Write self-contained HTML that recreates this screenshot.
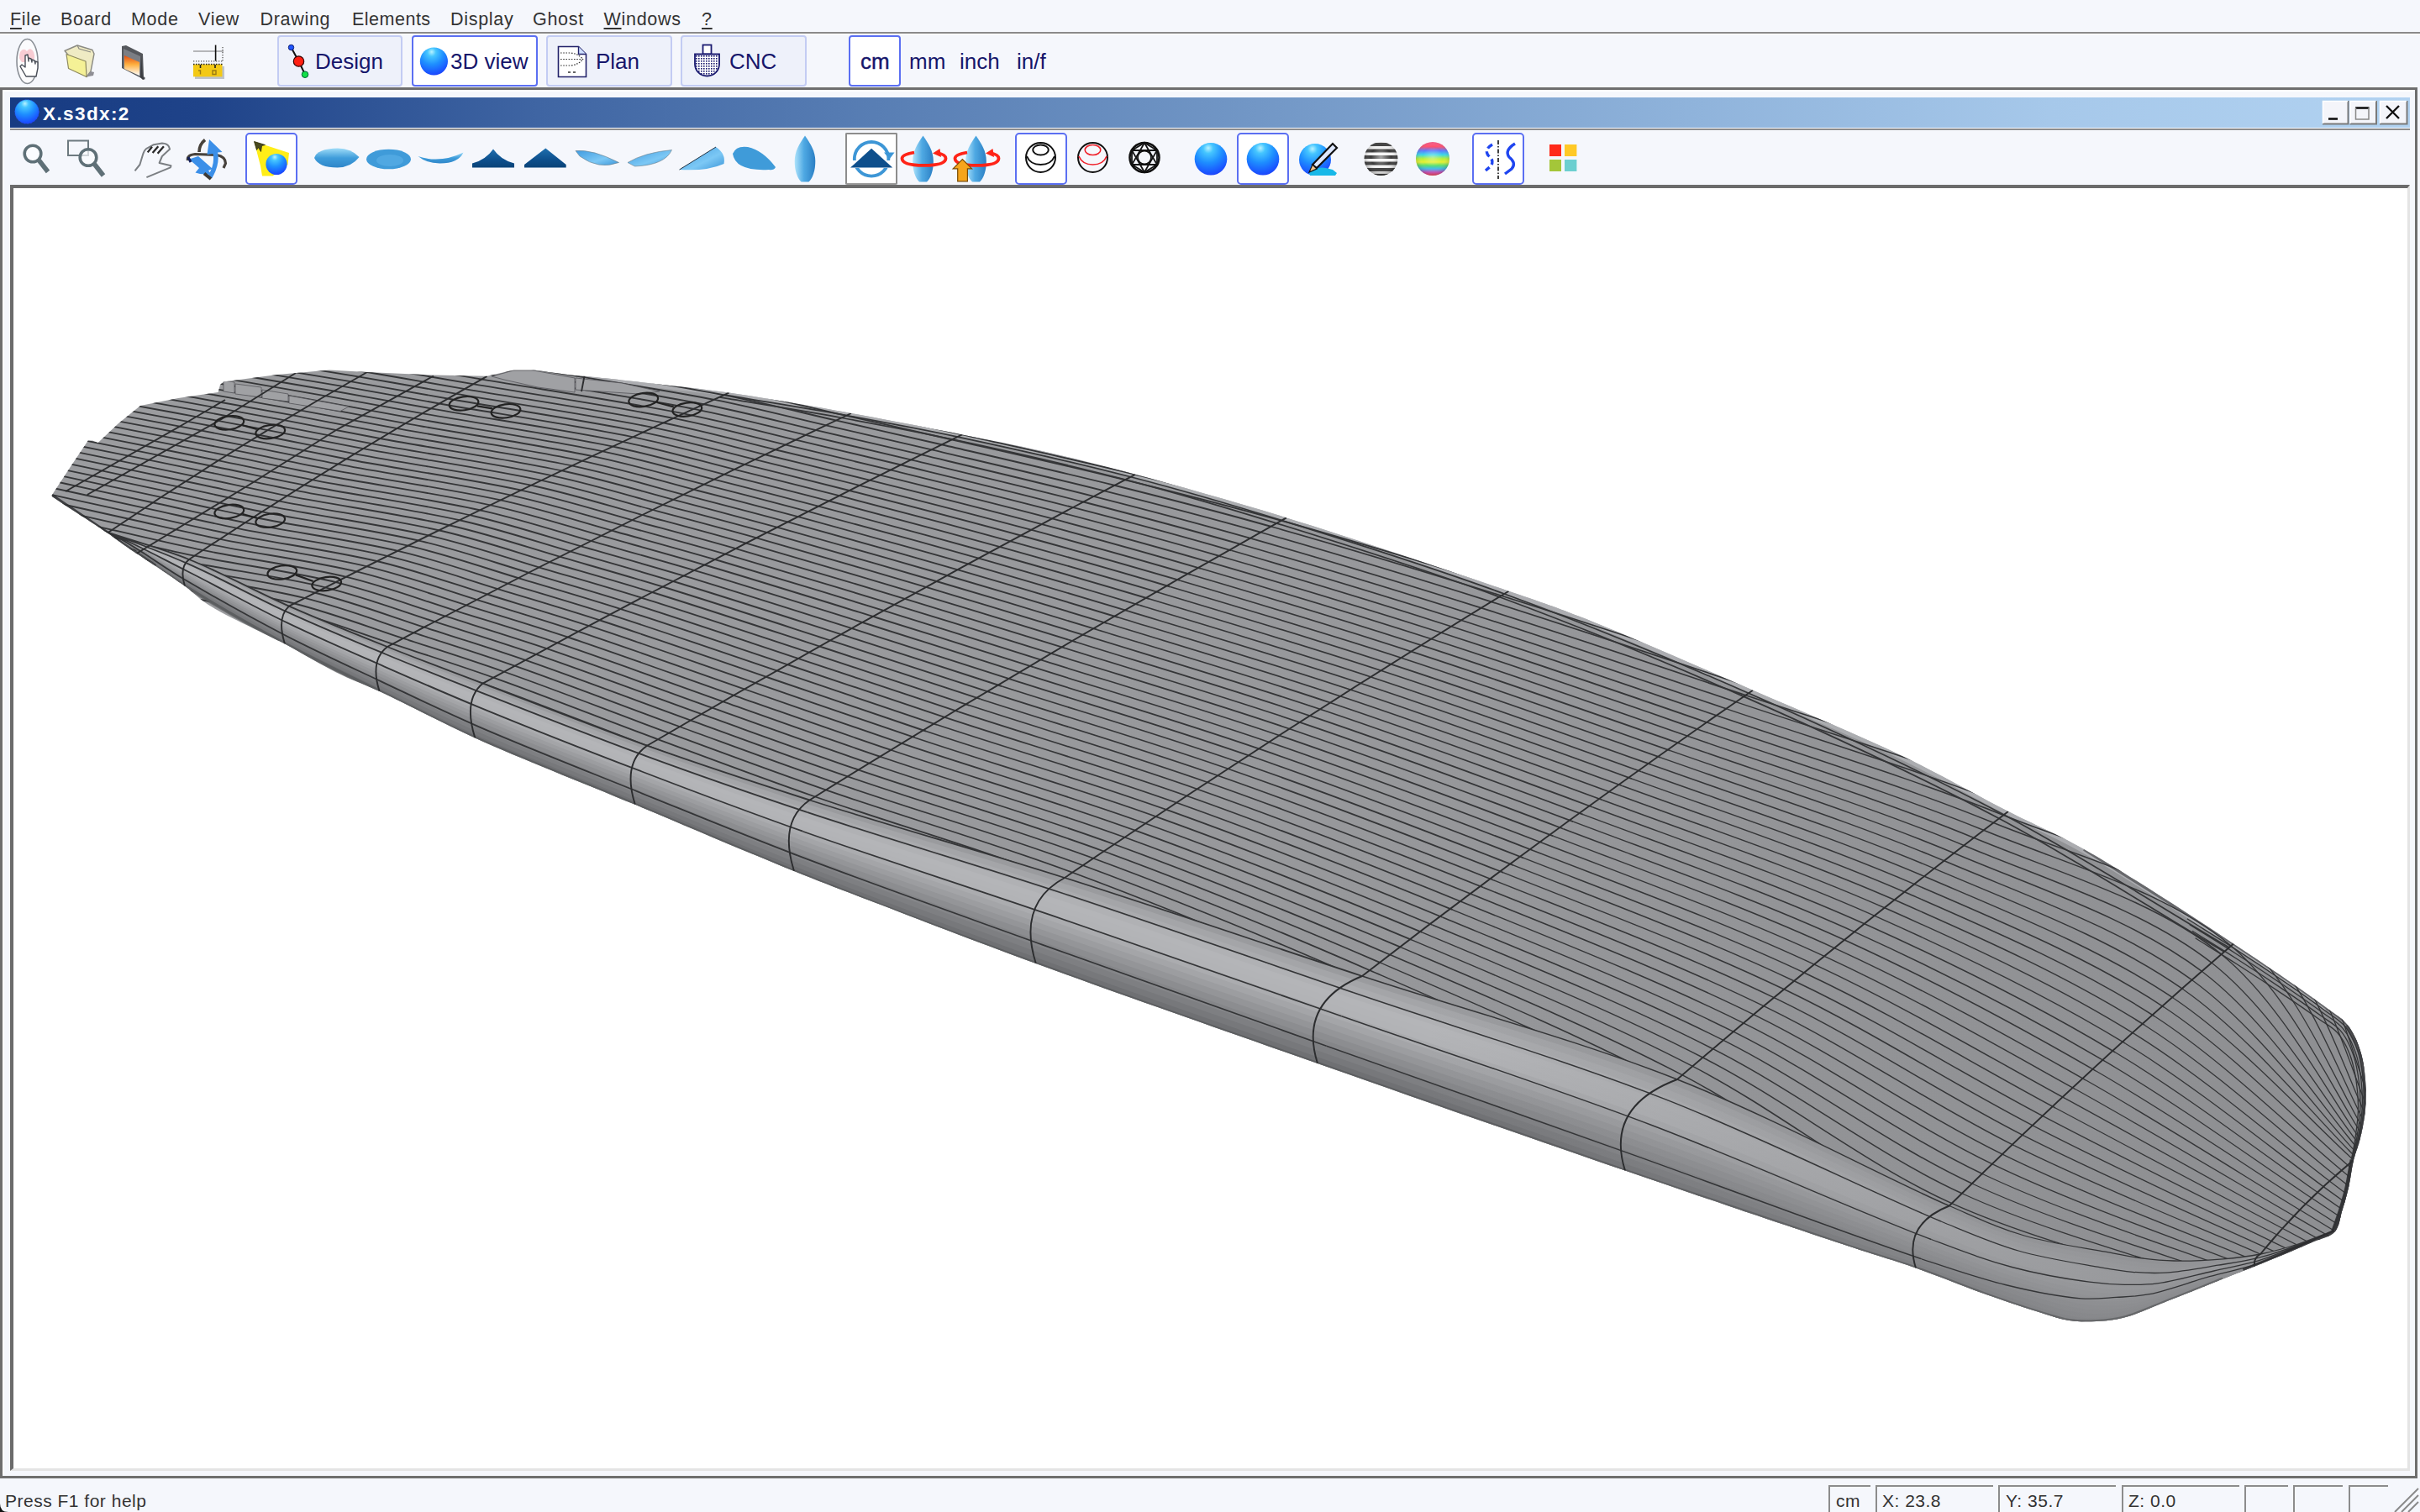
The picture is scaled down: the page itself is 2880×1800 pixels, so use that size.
<!DOCTYPE html>
<html><head><meta charset="utf-8"><title>Shape3d</title>
<style>
html,body{margin:0;padding:0}
body{width:2880px;height:1800px;background:#f5f7fc;position:relative;overflow:hidden;font-family:"Liberation Sans",sans-serif;color:#222}
.abs{position:absolute}
#menubar{left:0;top:0;width:2880px;height:38px;background:#f5f7fc}
#menubar span{position:absolute;top:9.5px;font-size:21.5px;line-height:26px;color:#333;white-space:nowrap;letter-spacing:.7px}
#menubar u{text-decoration:underline;text-underline-offset:3px;text-decoration-thickness:2px}
#msep{left:0;top:38px;width:2880px;height:2px;background:#8a8a8a}
#msep2{left:0;top:40px;width:2880px;height:1px;background:#fff}
.tbtn{position:absolute;top:42px;height:57px;border:2px solid #c3ccf3;border-radius:4px;background:#eef1fa;box-sizing:content-box}
.tbtn.sel{border-color:#5b6ff2;background:#fff}
.tlabel{position:absolute;font-size:26px;line-height:30px;color:#16166b;white-space:nowrap}
.sbtn{position:absolute;top:158px;width:58px;height:58px;border:2px solid #5b6ff2;border-radius:5px;background:#fff}
.sbtn.gray{border-color:#8d8d8d;border-radius:2px;border-bottom-color:#9a9a9a}
#status span{position:absolute;font-size:21px;line-height:26px;color:#333;white-space:nowrap;letter-spacing:.5px;margin-top:1.5px}
.pan{position:absolute;top:1768px;height:32px;border-left:2px solid #8c8c8c;border-top:2px solid #8c8c8c;box-sizing:border-box}
svg{position:absolute;left:0;top:0;overflow:visible}
</style></head>
<body>
<!-- menu bar -->
<div id="menubar" class="abs">
<span style="left:12px"><u>F</u>ile</span>
<span style="left:72px">Board</span>
<span style="left:156px">Mode</span>
<span style="left:236px">View</span>
<span style="left:309.5px">Drawing</span>
<span style="left:419px;letter-spacing:.5px">Elements</span>
<span style="left:536px">Display</span>
<span style="left:634px">Ghost</span>
<span style="left:718.5px"><u>W</u>indows</span>
<span style="left:835px"><u>?</u></span>
</div>
<div id="msep" class="abs"></div><div id="msep2" class="abs"></div>

<!-- main toolbar buttons -->
<div class="tbtn" style="left:330px;width:145px"></div>
<div class="tbtn sel" style="left:490px;width:146px"></div>
<div class="tbtn" style="left:650px;width:146px"></div>
<div class="tbtn" style="left:810px;width:146px"></div>
<div class="tbtn sel" style="left:1010px;width:58px"></div>
<span class="tlabel" style="left:375px;top:58px">Design</span>
<span class="tlabel" style="left:536px;top:58px">3D view</span>
<span class="tlabel" style="left:709px;top:58px">Plan</span>
<span class="tlabel" style="left:868px;top:58px">CNC</span>
<span class="tlabel" style="left:1024px;top:58px;-webkit-text-stroke:.4px #16166b">cm</span>
<span class="tlabel" style="left:1082px;top:58px">mm</span>
<span class="tlabel" style="left:1142px;top:58px">inch</span>
<span class="tlabel" style="left:1210px;top:58px">in/f</span>

<!-- MDI child frame -->
<div class="abs" style="left:0;top:104px;width:2877px;height:1656px;background:#f5f7fc;box-sizing:border-box;border:3px solid #6e6e6e;border-top-width:3px"></div>
<div class="abs" style="left:3px;top:107px;width:2869px;height:1648px;box-sizing:border-box;border-left:2px solid #fff;border-top:2px solid #fff"></div>
<!-- title bar -->
<div class="abs" style="left:12px;top:116px;width:2856px;height:36px;background:linear-gradient(90deg,#173b82 0%,#1f4389 8%,#3f65a3 22%,#587eb4 36%,#7297c6 52%,#8fb3db 70%,#a6c8ea 85%,#b1d2f1 100%)"></div>
<div class="abs" style="left:12px;top:153px;width:2856px;height:2px;background:#8e8e8e"></div>
<span class="abs" style="left:51px;top:124px;font-size:22.5px;line-height:24px;color:#fff;font-weight:bold;letter-spacing:1.4px;white-space:nowrap">X.s3dx:2</span>
<!-- client area -->
<div class="abs" style="left:12px;top:220px;width:2856px;height:1531px;background:#fff;box-sizing:border-box;border-left:4px solid #6b6b6b;border-top:4px solid #6b6b6b;border-right:3px solid #e4e4e4;border-bottom:3px solid #e4e4e4"></div>
<!-- secondary toolbar selected buttons -->
<div class="sbtn" style="left:292px"></div>
<div class="sbtn gray" style="left:1006px"></div>
<div class="sbtn" style="left:1208px"></div>
<div class="sbtn" style="left:1472px"></div>
<div class="sbtn" style="left:1752px"></div>

<!-- status bar -->
<div id="status">
<span style="left:6px;top:1772px">Press F1 for help</span>
<div class="pan" style="left:2176px;width:50px"></div>
<div class="pan" style="left:2232px;width:140px"></div>
<div class="pan" style="left:2378px;width:140px"></div>
<div class="pan" style="left:2525px;width:140px"></div>
<div class="pan" style="left:2671px;width:52px"></div>
<div class="pan" style="left:2729px;width:59px"></div>
<div class="pan" style="left:2795px;width:47px"></div>
<span style="left:2185px;top:1772px">cm</span>
<span style="left:2240px;top:1772px">X: 23.8</span>
<span style="left:2387px;top:1772px">Y: 35.7</span>
<span style="left:2533px;top:1772px">Z: 0.0</span>
</div>
<svg width="2880" height="1800" viewBox="0 0 2880 1800"><defs><clipPath id="bclip"><path d="M61.7 589.5 L83.0 557.0 L104.8 524.5 L110.0 524.5 L116.7 527.0 L141.0 504.0 L167.0 483.0 L212.0 474.0 L259.6 467.0 L262.0 458.0 L266.0 454.4 L330.0 446.0 L392.0 440.6 L437.0 443.0 L516.0 446.5 L579.7 447.8 L596.0 444.0 L611.4 440.6 L635.0 440.6C650.0 442.6 668.9 445.3 680.0 446.5C686.5 447.2 688.3 447.1 695.5 447.8C712.4 449.4 751.6 453.7 780.0 457.0C808.9 460.3 834.7 462.9 867.5 467.6C909.9 473.7 965.7 483.5 1013.0 492.0C1058.1 500.1 1104.6 509.4 1145.0 517.4C1179.3 524.2 1207.2 529.5 1240.0 537.0C1275.6 545.1 1309.7 553.7 1351.0 564.8C1403.9 579.0 1465.5 596.2 1531.0 616.4C1610.9 641.0 1731.9 681.8 1795.5 703.7C1831.6 716.1 1845.9 720.6 1880.0 734.0C1933.9 755.1 2019.9 793.1 2086.0 821.7C2147.5 848.3 2210.0 874.1 2263.8 900.0C2309.9 922.2 2351.4 946.3 2390.0 966.0C2422.4 982.6 2445.5 991.5 2480.0 1011.0C2529.9 1039.2 2605.9 1089.1 2658.0 1123.5C2699.7 1151.0 2745.5 1182.4 2769.0 1200.0C2780.4 1208.5 2787.1 1211.8 2793.7 1220.0C2800.5 1228.4 2805.2 1239.3 2808.7 1250.0C2812.4 1261.1 2814.0 1273.6 2815.0 1285.5C2816.0 1297.2 2816.0 1309.0 2815.0 1320.7C2814.0 1332.5 2811.3 1345.3 2808.7 1356.0C2806.5 1365.1 2803.2 1372.0 2801.0 1381.0C2798.5 1391.1 2797.4 1403.3 2795.0 1413.7C2792.8 1423.3 2790.2 1432.1 2787.4 1441.0C2784.7 1449.7 2784.2 1460.2 2778.6 1466.4C2772.8 1472.8 2762.5 1474.1 2752.7 1478.4C2740.2 1483.9 2725.5 1490.2 2709.7 1496.7C2690.4 1504.7 2666.8 1513.9 2645.3 1522.5C2623.8 1531.1 2601.4 1540.3 2580.8 1548.3C2562.1 1555.6 2542.8 1564.7 2527.0 1568.7C2515.1 1571.7 2505.6 1572.5 2494.9 1573.0C2484.2 1573.5 2473.3 1573.6 2462.6 1572.0C2451.8 1570.4 2442.9 1567.1 2430.4 1563.3C2412.6 1557.9 2388.9 1549.9 2366.0 1541.8C2339.3 1532.4 2308.3 1519.5 2280.0 1509.6C2253.0 1500.1 2234.4 1495.0 2200.0 1483.6C2137.1 1462.8 2029.6 1426.5 1934.0 1393.6C1821.6 1355.0 1687.3 1308.0 1568.0 1266.0C1453.8 1225.8 1329.0 1182.3 1232.8 1147.0C1159.5 1120.1 1093.0 1094.3 1040.0 1074.0C1002.7 1059.7 982.0 1051.9 945.0 1037.0C892.6 1015.8 819.0 984.2 755.8 957.8C692.4 931.3 620.3 903.3 565.3 878.4C522.2 858.9 482.2 837.2 451.6 823.0C431.2 813.5 417.7 809.2 400.0 800.4C380.3 790.7 361.5 778.6 339.0 766.6C311.8 752.1 269.2 733.6 248.0 720.0C235.5 711.9 231.8 706.4 220.0 697.8C201.4 684.1 161.8 658.7 145.8 647.5C138.0 642.0 136.3 640.3 128.6 635.0C113.7 624.7 84.0 605.7 61.7 591.0Z"/></clipPath>
<linearGradient id="deckg" gradientUnits="userSpaceOnUse" x1="200" y1="450" x2="2700" y2="1500"><stop offset="0" stop-color="#9b9c9f"/><stop offset="0.55" stop-color="#97989b"/><stop offset="1" stop-color="#8e8f92"/></linearGradient></defs>
<path d="M61.7 589.5 L83.0 557.0 L104.8 524.5 L110.0 524.5 L116.7 527.0 L141.0 504.0 L167.0 483.0 L212.0 474.0 L259.6 467.0 L262.0 458.0 L266.0 454.4 L330.0 446.0 L392.0 440.6 L437.0 443.0 L516.0 446.5 L579.7 447.8 L596.0 444.0 L611.4 440.6 L635.0 440.6C650.0 442.6 668.9 445.3 680.0 446.5C686.5 447.2 688.3 447.1 695.5 447.8C712.4 449.4 751.6 453.7 780.0 457.0C808.9 460.3 834.7 462.9 867.5 467.6C909.9 473.7 965.7 483.5 1013.0 492.0C1058.1 500.1 1104.6 509.4 1145.0 517.4C1179.3 524.2 1207.2 529.5 1240.0 537.0C1275.6 545.1 1309.7 553.7 1351.0 564.8C1403.9 579.0 1465.5 596.2 1531.0 616.4C1610.9 641.0 1731.9 681.8 1795.5 703.7C1831.6 716.1 1845.9 720.6 1880.0 734.0C1933.9 755.1 2019.9 793.1 2086.0 821.7C2147.5 848.3 2210.0 874.1 2263.8 900.0C2309.9 922.2 2351.4 946.3 2390.0 966.0C2422.4 982.6 2445.5 991.5 2480.0 1011.0C2529.9 1039.2 2605.9 1089.1 2658.0 1123.5C2699.7 1151.0 2745.5 1182.4 2769.0 1200.0C2780.4 1208.5 2787.1 1211.8 2793.7 1220.0C2800.5 1228.4 2805.2 1239.3 2808.7 1250.0C2812.4 1261.1 2814.0 1273.6 2815.0 1285.5C2816.0 1297.2 2816.0 1309.0 2815.0 1320.7C2814.0 1332.5 2811.3 1345.3 2808.7 1356.0C2806.5 1365.1 2803.2 1372.0 2801.0 1381.0C2798.5 1391.1 2797.4 1403.3 2795.0 1413.7C2792.8 1423.3 2790.2 1432.1 2787.4 1441.0C2784.7 1449.7 2784.2 1460.2 2778.6 1466.4C2772.8 1472.8 2762.5 1474.1 2752.7 1478.4C2740.2 1483.9 2725.5 1490.2 2709.7 1496.7C2690.4 1504.7 2666.8 1513.9 2645.3 1522.5C2623.8 1531.1 2601.4 1540.3 2580.8 1548.3C2562.1 1555.6 2542.8 1564.7 2527.0 1568.7C2515.1 1571.7 2505.6 1572.5 2494.9 1573.0C2484.2 1573.5 2473.3 1573.6 2462.6 1572.0C2451.8 1570.4 2442.9 1567.1 2430.4 1563.3C2412.6 1557.9 2388.9 1549.9 2366.0 1541.8C2339.3 1532.4 2308.3 1519.5 2280.0 1509.6C2253.0 1500.1 2234.4 1495.0 2200.0 1483.6C2137.1 1462.8 2029.6 1426.5 1934.0 1393.6C1821.6 1355.0 1687.3 1308.0 1568.0 1266.0C1453.8 1225.8 1329.0 1182.3 1232.8 1147.0C1159.5 1120.1 1093.0 1094.3 1040.0 1074.0C1002.7 1059.7 982.0 1051.9 945.0 1037.0C892.6 1015.8 819.0 984.2 755.8 957.8C692.4 931.3 620.3 903.3 565.3 878.4C522.2 858.9 482.2 837.2 451.6 823.0C431.2 813.5 417.7 809.2 400.0 800.4C380.3 790.7 361.5 778.6 339.0 766.6C311.8 752.1 269.2 733.6 248.0 720.0C235.5 711.9 231.8 706.4 220.0 697.8C201.4 684.1 161.8 658.7 145.8 647.5C138.0 642.0 136.3 640.3 128.6 635.0C113.7 624.7 84.0 605.7 61.7 591.0Z" fill="url(#deckg)"/>
<g clip-path="url(#bclip)">
<path fill="none" stroke="#b2b3b6" stroke-opacity=".8" stroke-width="9" d="M695.5 447.8C723.7 450.9 751.6 453.7 780.0 457.0C808.9 460.3 834.7 462.9 867.5 467.6C909.9 473.7 965.7 483.5 1013.0 492.0C1058.1 500.1 1104.6 509.4 1145.0 517.4C1179.3 524.2 1207.2 529.5 1240.0 537.0C1275.6 545.1 1309.7 553.7 1351.0 564.8C1403.9 579.0 1465.5 596.2 1531.0 616.4C1610.9 641.0 1731.9 681.8 1795.5 703.7C1831.6 716.1 1845.9 720.6 1880.0 734.0C1933.9 755.1 2019.9 793.1 2086.0 821.7C2147.5 848.3 2210.0 874.1 2263.8 900.0C2309.9 922.2 2351.4 946.3 2390.0 966.0C2422.4 982.6 2445.5 991.5 2480.0 1011.0C2529.9 1039.2 2605.9 1089.1 2658.0 1123.5C2699.7 1151.0 2732.0 1174.5 2769.0 1200.0"/>
<path fill="none" stroke="#343537" stroke-width="1.85" d="M255.1 358.0C298.3 364.3 341.8 370.4 384.8 376.8C427.4 383.3 470.2 390.0 511.8 396.7C552.1 403.2 583.7 408.5 630.7 416.4C699.5 427.9 813.6 445.4 884.7 459.3C936.6 469.4 974.8 479.3 1018.8 489.1C1061.5 498.6 1097.8 506.7 1145.0 517.4C1205.3 531.1 1284.2 548.5 1351.0 564.8C1414.7 580.4 1469.2 594.0 1536.9 612.9M246.1 363.7C289.2 370.0 332.6 376.2 375.5 382.7C418.0 389.1 460.8 395.8 502.3 402.5C542.6 409.0 574.2 414.5 621.1 422.3C689.5 433.8 802.5 450.9 873.2 464.8C925.1 475.0 963.2 485.0 1007.2 494.9C1049.9 504.5 1086.2 512.6 1133.3 523.5C1193.6 537.3 1272.4 554.9 1339.1 571.4C1402.8 587.1 1457.3 600.9 1525.1 619.9M237.1 369.4C280.1 375.8 323.4 381.9 366.2 388.4C408.7 394.9 451.4 401.6 492.9 408.4C533.1 414.9 564.7 420.4 611.5 428.2C679.6 439.6 791.5 456.5 861.8 470.4C913.5 480.6 951.7 490.7 995.7 500.7C1038.3 510.4 1074.5 518.6 1121.6 529.5C1181.8 543.5 1260.5 561.4 1327.2 578.0C1390.8 593.9 1445.4 607.9 1513.2 627.0M228.1 375.1C271.1 381.5 314.3 387.7 357.0 394.2C399.4 400.7 442.0 407.5 483.5 414.2C523.6 420.8 555.3 426.2 602.0 434.1C669.6 445.5 780.4 462.1 850.3 475.9C901.9 486.2 940.2 496.5 984.1 506.6C1026.7 516.4 1062.9 524.6 1109.9 535.6C1170.0 549.8 1248.6 567.9 1315.2 584.7C1378.9 600.7 1433.4 614.8 1501.3 634.0M219.2 380.8C262.1 387.2 305.2 393.4 347.8 399.9C390.1 406.5 432.7 413.2 474.1 420.0C514.2 426.6 545.9 432.1 592.5 439.9C659.7 451.3 769.3 467.7 838.8 481.5C890.3 491.8 928.6 502.2 972.4 512.4C1015.0 522.3 1051.1 530.6 1098.1 541.7C1158.2 556.0 1236.6 574.4 1303.2 591.3C1366.9 607.5 1421.4 621.8 1489.3 641.1M210.4 386.4C253.2 392.8 296.1 399.1 338.7 405.7C380.9 412.2 423.4 419.0 464.8 425.8C504.8 432.4 536.5 437.9 583.0 445.8C649.8 457.1 758.2 473.2 827.2 487.1C878.6 497.5 917.0 508.0 960.8 518.3C1003.3 528.3 1039.4 536.6 1086.3 547.9C1146.3 562.3 1224.7 580.9 1291.2 598.0C1354.8 614.4 1409.4 628.8 1477.3 648.2M201.6 392.0C244.3 398.4 287.1 404.7 329.6 411.3C371.8 417.9 414.2 424.7 455.5 431.6C495.5 438.2 527.2 443.7 573.6 451.6C639.9 462.9 747.1 478.9 815.7 492.8C866.9 503.1 905.3 513.8 949.1 524.2C991.5 534.2 1027.6 542.6 1074.5 554.0C1134.4 568.6 1212.7 587.4 1279.2 604.7C1342.8 621.2 1397.3 635.8 1465.3 655.3M192.8 397.5C235.4 404.0 278.2 410.4 320.6 417.0C362.6 423.6 405.0 430.4 446.2 437.3C486.1 443.9 517.9 449.5 564.1 457.4C630.0 468.7 735.9 484.5 804.0 498.4C855.2 508.8 893.6 519.6 937.4 530.1C979.8 540.2 1015.8 548.7 1062.6 560.2C1122.5 574.9 1200.6 594.0 1267.1 611.4C1330.7 628.1 1385.2 642.8 1453.2 662.5M184.1 403.1C226.6 409.6 269.3 416.0 311.6 422.6C353.6 429.3 395.9 436.1 437.0 443.0C476.8 449.7 508.5 455.4 554.6 463.3C620.0 474.5 724.7 490.1 792.4 504.0C843.4 514.5 881.9 525.5 925.6 536.0C968.0 546.2 1004.0 554.8 1050.7 566.4C1110.5 581.2 1188.5 600.6 1255.0 618.2C1318.6 635.0 1373.1 649.8 1441.1 669.6M175.4 408.6C217.8 415.1 260.4 421.5 302.6 428.2C344.5 434.9 386.8 441.8 427.8 448.7C467.5 455.4 499.2 461.2 545.0 469.1C610.0 480.4 713.5 495.8 780.7 509.7C831.6 520.2 870.1 531.3 913.8 542.0C956.1 552.3 992.1 560.8 1038.8 572.6C1098.5 587.5 1176.4 607.2 1242.8 624.9C1306.4 641.9 1360.9 656.9 1429.0 676.8M166.8 414.1C209.1 420.7 251.6 427.1 293.7 433.8C335.5 440.5 377.6 447.5 418.5 454.4C458.1 461.2 489.8 467.1 535.4 475.0C599.9 486.3 702.2 501.5 769.0 515.4C819.7 526.0 858.4 537.2 902.0 547.9C944.3 558.3 980.2 566.9 1026.8 578.8C1086.5 593.9 1164.3 613.8 1230.6 631.7C1294.2 648.9 1348.8 664.0 1416.9 684.0M158.2 419.5C200.4 426.1 242.8 432.6 284.8 439.4C326.5 446.1 368.4 453.2 409.2 460.2C448.7 467.0 480.3 473.0 525.8 481.0C589.8 492.2 690.9 507.2 757.2 521.1C807.9 531.7 846.5 543.1 890.1 553.9C932.4 564.4 968.2 573.1 1014.8 585.0C1074.5 600.3 1152.1 620.4 1218.4 638.5C1282.0 655.8 1336.5 671.1 1404.7 691.2M149.7 424.9C191.8 431.6 234.0 438.1 275.9 445.0C317.4 451.8 359.2 458.9 399.9 466.0C439.3 472.9 470.9 478.9 516.1 486.9C579.7 498.2 679.6 512.9 745.5 526.8C795.9 537.5 834.7 549.0 878.2 559.9C920.4 570.4 956.3 579.2 1002.8 591.2C1062.4 606.7 1139.9 627.1 1206.2 645.3C1269.7 662.8 1324.3 678.2 1392.5 698.5M141.2 430.3C183.1 437.1 225.2 443.6 266.9 450.6C308.3 457.4 350.0 464.6 390.5 471.8C429.8 478.7 461.3 484.8 506.4 492.9C569.5 504.1 668.3 518.6 733.6 532.5C784.0 543.3 822.8 554.9 866.3 565.9C908.5 576.5 944.3 585.3 990.7 597.5C1050.2 613.1 1127.7 633.7 1193.9 652.1C1257.4 669.8 1312.0 685.4 1380.2 705.7M132.8 435.7C174.5 442.5 216.4 449.2 257.9 456.2C299.2 463.1 340.7 470.4 381.1 477.6C420.3 484.6 451.8 490.8 496.7 498.8C559.3 510.1 656.9 524.4 721.8 538.3C772.0 549.0 810.9 560.8 854.4 571.9C896.5 582.6 932.2 591.5 978.6 603.8C1038.1 619.5 1115.4 640.4 1181.6 659.0C1245.1 676.8 1299.6 692.5 1367.9 713.0M124.3 441.1C165.8 448.0 207.5 454.7 248.9 461.8C290.0 468.9 331.4 476.2 371.7 483.5C410.7 490.5 442.2 496.8 487.0 504.8C549.1 516.1 645.4 530.2 709.9 544.1C760.0 554.9 798.9 566.8 842.4 577.9C884.4 588.8 920.1 597.7 966.5 610.1C1025.9 625.9 1103.1 647.1 1169.2 665.8C1232.7 683.8 1287.3 699.7 1355.6 720.3M115.8 446.5C157.1 453.5 198.6 460.3 239.8 467.5C280.8 474.6 322.1 482.0 362.2 489.3C401.1 496.5 432.6 502.8 477.2 510.9C538.9 522.1 634.0 536.0 698.0 549.8C748.0 560.7 787.0 572.7 830.3 584.0C872.4 594.9 908.0 603.9 954.4 616.4C1013.7 632.4 1090.8 653.8 1156.8 672.7C1220.3 690.9 1274.9 706.9 1343.2 727.6M107.2 451.9C148.4 459.0 189.7 466.0 230.7 473.2C271.5 480.4 312.7 487.8 352.7 495.2C391.5 502.4 423.0 508.8 467.3 516.9C528.6 528.1 622.5 541.8 686.0 555.6C735.9 566.5 774.9 578.7 818.3 590.1C860.3 601.1 895.9 610.1 942.2 622.7C1001.4 638.9 1078.4 660.5 1144.4 679.6C1207.9 698.0 1262.4 714.1 1330.8 735.0M98.6 457.4C139.6 464.6 180.7 471.6 221.6 478.9C262.2 486.2 303.2 493.7 343.1 501.2C381.8 508.4 413.3 514.8 457.5 523.0C518.2 534.2 611.0 547.6 674.0 561.5C723.8 572.4 762.9 584.7 806.2 596.1C848.1 607.2 883.7 616.4 930.0 629.1C989.1 645.4 1066.0 667.3 1132.0 686.5C1195.4 705.1 1250.0 721.4 1318.4 742.3M89.9 462.9C130.7 470.2 171.7 477.3 212.4 484.7C252.9 492.0 293.8 499.6 333.5 507.1C372.1 514.4 403.6 520.9 447.6 529.1C507.9 540.2 599.4 553.5 662.0 567.3C711.6 578.3 750.8 590.7 794.1 602.3C836.0 613.4 871.5 622.6 917.7 635.4C976.8 651.9 1053.6 674.1 1119.5 693.5C1182.9 712.2 1237.5 728.6 1305.9 749.7M81.2 468.5C121.8 475.8 162.6 483.0 203.2 490.5C243.5 497.9 284.2 505.5 323.9 513.1C362.4 520.4 393.8 527.0 437.7 535.2C497.4 546.3 587.8 559.3 650.0 573.1C699.4 584.1 738.7 596.7 781.9 608.4C823.8 619.6 859.3 628.9 905.4 641.8C964.5 658.4 1041.1 680.9 1107.0 700.4C1170.4 719.3 1224.9 735.9 1293.4 757.1M72.4 474.0C112.9 481.4 153.5 488.7 193.9 496.3C234.1 503.7 274.7 511.4 314.2 519.0C352.6 526.4 384.0 533.1 427.7 541.3C487.0 552.4 576.2 565.2 637.9 579.0C687.2 590.0 726.5 602.8 769.7 614.5C811.6 625.8 847.0 635.2 893.1 648.2C952.1 664.9 1028.6 687.7 1094.4 707.4C1157.8 726.4 1212.4 743.2 1280.9 764.5M63.6 479.6C103.9 487.1 144.3 494.5 184.6 502.1C224.6 509.6 265.1 517.4 304.5 525.1C342.8 532.5 374.2 539.2 417.7 547.5C476.5 558.6 564.6 571.1 625.8 584.9C674.9 596.0 714.4 608.8 757.5 620.7C799.3 632.1 834.7 641.5 880.7 654.6C939.7 671.5 1016.1 694.5 1081.8 714.4C1145.2 733.6 1199.8 750.5 1268.4 771.9M54.8 485.2C94.9 492.8 135.1 500.3 175.2 507.9C215.1 515.6 255.5 523.4 294.8 531.1C332.9 538.6 364.4 545.4 407.7 553.6C466.0 564.7 552.9 577.0 613.6 590.8C662.7 601.9 702.1 614.9 745.3 626.8C787.0 638.3 822.4 647.8 868.4 661.1C927.2 678.1 1003.5 701.3 1069.2 721.4C1132.6 740.8 1187.1 757.9 1255.8 779.4M45.9 490.9C85.8 498.5 125.9 506.1 165.8 513.8C205.6 521.5 245.8 529.4 285.0 537.2C323.1 544.7 354.5 551.6 397.6 559.8C455.5 570.9 541.2 583.0 601.4 596.7C650.3 607.9 689.9 621.0 733.0 633.0C774.7 644.6 810.0 654.1 855.9 667.5C914.7 684.7 991.0 708.2 1056.6 728.4C1119.9 748.0 1174.5 765.2 1243.1 786.9M36.9 496.6C76.7 504.3 116.6 511.9 156.4 519.7C196.0 527.5 236.1 535.4 275.2 543.2C313.1 550.8 344.6 557.8 387.5 566.0C444.9 577.1 529.4 588.9 589.2 602.6C638.0 613.8 677.6 627.1 720.7 639.2C762.3 650.9 797.7 660.4 843.5 674.0C902.2 691.3 978.3 715.1 1043.9 735.5C1107.2 755.2 1161.8 772.6 1230.5 794.4M27.9 502.3C67.6 510.1 107.3 517.8 146.9 525.7C186.4 533.5 226.4 541.5 265.3 549.3C303.2 557.0 334.6 564.0 377.4 572.3C434.3 583.3 517.6 594.9 576.9 608.6C625.6 619.8 665.3 633.3 708.3 645.4C749.9 657.2 785.2 666.8 831.0 680.4C889.7 697.9 965.7 722.0 1031.2 742.5C1094.5 762.4 1149.0 780.0 1217.8 801.9M18.9 508.0C58.4 515.9 97.9 523.7 137.4 531.6C176.8 539.5 216.6 547.5 255.4 555.5C293.2 563.2 324.6 570.2 367.2 578.5C423.7 589.5 505.8 600.9 564.6 614.5C613.1 625.8 652.9 639.4 696.0 651.7C737.5 663.5 772.8 673.2 818.5 686.9C877.1 704.6 953.0 728.9 1018.4 749.6C1081.7 769.7 1136.3 787.4 1205.0 809.4M9.8 513.8C49.1 521.7 88.5 529.6 127.8 537.6C167.1 545.6 206.8 553.6 245.5 561.6C283.2 569.4 314.6 576.5 357.0 584.8C413.0 595.7 493.9 606.9 552.3 620.5C600.7 631.8 640.6 645.6 683.5 657.9C725.1 669.9 760.3 679.6 806.0 693.5C864.5 711.2 940.2 735.8 1005.7 756.7C1068.9 777.0 1123.5 794.8 1192.3 817.0M0.7 519.6C39.8 527.6 79.0 535.6 118.2 543.6C157.3 551.6 196.9 559.8 235.5 567.8C273.1 575.6 304.5 582.8 346.8 591.1C402.3 602.0 482.1 612.9 539.9 626.5C588.2 637.9 628.2 651.7 671.1 664.2C712.6 676.2 747.7 686.0 793.4 700.0C851.9 717.9 927.5 742.8 992.8 763.9C1056.1 784.3 1110.6 802.3 1179.5 824.6M-8.5 525.4C30.5 533.5 69.5 541.5 108.6 549.6C147.5 557.7 187.0 565.9 225.5 574.0C263.0 581.8 294.4 589.1 336.5 597.4C391.5 608.3 470.2 619.0 527.5 632.5C575.7 643.9 615.7 657.9 658.6 670.5C700.1 682.6 735.2 692.4 780.8 706.5C839.2 724.6 914.7 749.7 980.0 771.0C1043.3 791.6 1097.8 809.8 1166.7 832.2M-17.7 531.3C21.1 539.4 60.0 547.5 98.9 555.7C137.7 563.9 177.1 572.1 215.5 580.2C252.9 588.1 284.3 595.4 326.2 603.7C380.7 614.6 458.2 625.1 515.1 638.6C563.1 650.0 603.2 664.1 646.1 676.8C687.5 689.0 722.6 698.9 768.1 713.1C826.5 731.3 901.9 756.7 967.1 778.1C1030.4 798.9 1084.9 817.3 1153.8 839.8M-27.0 537.1C11.7 545.4 50.4 553.6 89.1 561.8C127.9 570.0 167.1 578.3 205.4 586.4C242.7 594.4 274.2 601.8 315.9 610.1C369.9 620.9 446.2 631.2 502.7 644.6C550.5 656.0 590.7 670.4 633.6 683.1C674.9 695.4 710.0 705.4 755.4 719.7C813.8 738.1 889.0 763.7 954.2 785.3C1017.4 806.3 1071.9 824.8 1140.9 847.4M-36.3 543.1C2.3 551.3 40.8 559.6 79.4 567.9C118.0 576.2 157.1 584.5 195.3 592.7C232.5 600.7 264.0 608.2 305.5 616.5C359.1 627.2 434.2 637.3 490.2 650.7C537.8 662.1 578.2 676.6 621.0 689.4C662.3 701.8 697.3 711.8 742.7 726.3C801.0 744.8 876.1 770.7 941.3 792.5C1004.5 813.6 1059.0 832.3 1128.0 855.1M-45.7 549.0C-7.3 557.3 31.1 565.7 69.6 574.0C108.0 582.4 147.1 590.8 185.1 599.0C222.2 607.0 253.7 614.6 295.1 622.9C348.2 633.6 422.2 643.4 477.6 656.8C525.2 668.2 565.6 682.9 608.4 695.8C649.7 708.2 684.6 718.3 730.0 732.9C788.2 751.6 863.2 777.8 928.3 799.7C991.5 821.0 1046.0 839.9 1115.0 862.8M-55.1 555.0C-16.8 563.4 21.4 571.8 59.7 580.2C98.1 588.6 137.0 597.0 174.9 605.3C211.9 613.4 243.5 621.0 284.6 629.3C337.3 640.0 410.1 649.5 465.1 662.9C512.5 674.4 553.0 689.1 595.7 702.1C637.0 714.7 671.9 724.9 717.2 739.5C775.3 758.4 850.2 784.8 915.3 807.0C978.4 828.5 1032.9 847.4 1102.0 870.5M-64.5 561.0C-26.4 569.4 11.7 577.9 49.8 586.4C88.1 594.8 126.9 603.3 164.7 611.6C201.6 619.8 233.2 627.4 274.2 635.8C326.3 646.4 398.0 655.7 452.5 669.0C499.7 680.5 540.3 695.4 583.0 708.5C624.3 721.2 659.2 731.4 704.4 746.2C762.5 765.2 837.2 791.9 902.2 814.2C965.4 835.9 1019.9 855.0 1089.0 878.2M-74.0 567.0C-36.0 575.5 1.9 584.1 39.9 592.6C78.0 601.1 116.7 609.6 154.4 618.0C191.3 626.2 222.8 633.9 263.6 642.2C315.3 652.8 385.8 661.9 439.8 675.1C486.9 686.6 527.7 701.7 570.3 714.9C611.5 727.7 646.4 737.9 691.6 752.9C749.6 772.0 824.2 799.0 889.2 821.5C952.3 843.3 1006.7 862.6 1075.9 885.9M-83.5 573.1C-45.7 581.7 -8.0 590.3 29.9 598.8C67.9 607.4 106.5 616.0 144.1 624.4C180.9 632.6 212.5 640.4 253.1 648.7C304.3 659.2 373.7 668.1 427.2 681.2C474.1 692.8 515.0 708.1 557.6 721.3C598.7 734.2 633.6 744.5 678.7 759.5C736.6 778.8 811.2 806.1 876.1 828.8C939.1 850.8 993.6 870.3 1062.8 893.7M-93.1 579.1C-55.5 587.8 -17.9 596.5 19.9 605.1C57.8 613.7 96.3 622.3 133.8 630.8C170.5 639.0 202.1 646.9 242.5 655.2C293.2 665.7 361.5 674.3 414.5 687.4C461.3 699.0 502.2 714.4 544.8 727.8C585.9 740.7 620.7 751.1 665.8 766.2C723.7 785.7 798.1 813.2 862.9 836.1C926.0 858.3 980.4 877.9 1049.7 901.5M-102.8 585.3C-65.2 594.0 -27.8 602.8 9.8 611.4C47.6 620.1 86.0 628.7 123.4 637.2C160.0 645.5 191.6 653.4 231.9 661.7C282.1 672.1 349.2 680.5 401.7 693.6C448.4 705.2 489.4 720.8 532.0 734.2C573.1 747.2 607.8 757.7 652.9 772.9C710.7 792.5 785.0 820.4 849.7 843.4C912.8 865.8 967.2 885.6 1036.5 909.3M-112.4 591.4C-75.0 600.2 -37.8 609.0 -0.3 617.7C37.4 626.4 75.7 635.1 113.0 643.7C149.5 652.0 181.2 660.0 221.3 668.3C271.0 678.6 337.0 686.8 389.0 699.8C435.5 711.4 476.6 727.1 519.2 740.7C560.2 753.8 594.9 764.3 639.9 779.7C697.7 799.4 771.8 827.5 836.5 850.7C899.6 873.3 954.0 893.3 1023.3 917.1M-122.2 597.6C-84.9 606.4 -47.8 615.3 -10.4 624.1C27.1 632.8 65.3 641.6 102.5 650.1C139.0 658.5 170.7 666.5 210.6 674.9C259.8 685.1 324.6 693.1 376.2 706.0C422.5 717.6 463.8 733.5 506.3 747.2C547.3 760.3 582.0 770.9 626.9 786.4C684.6 806.3 758.6 834.7 823.3 858.1C886.3 880.8 940.7 901.0 1010.1 924.9M-131.9 603.8C-94.8 612.7 -57.8 621.6 -20.6 630.4C16.8 639.3 54.9 648.0 92.0 656.6C128.4 665.0 160.1 673.1 199.9 681.5C248.6 691.6 312.3 699.3 363.3 712.2C409.5 723.9 450.9 739.9 493.4 753.7C534.4 766.9 569.0 777.6 613.9 793.2C671.5 813.3 745.4 841.9 810.0 865.5C873.0 888.4 927.4 908.7 996.8 932.8M-141.7 610.0C-104.8 619.0 -67.9 628.0 -30.8 636.8C6.5 645.7 44.5 654.5 81.5 663.2C117.8 671.6 149.5 679.8 189.1 688.1C237.4 698.2 299.9 705.7 350.4 718.5C396.5 730.2 438.0 746.4 480.5 760.2C521.4 773.5 556.0 784.2 600.8 800.0C658.4 820.2 732.1 849.1 796.7 872.9C859.7 896.0 914.1 916.4 983.5 940.6M-151.6 616.3C-114.8 625.3 -78.1 634.4 -41.1 643.2C-3.9 652.2 34.0 661.0 71.0 669.7C107.1 678.2 138.9 686.4 178.3 694.7C226.1 704.8 287.5 712.0 337.5 724.7C383.4 736.4 425.1 752.8 467.5 766.7C508.4 780.1 543.0 790.9 587.7 806.8C645.2 827.1 718.9 856.4 783.4 880.3C846.3 903.6 900.7 924.2 970.2 948.5M-161.5 622.6C-124.8 631.6 -88.2 640.8 -51.4 649.7C-14.3 658.7 23.5 667.6 60.4 676.3C96.4 684.8 128.3 693.1 167.5 701.4C214.8 711.3 275.1 718.3 324.6 731.0C370.4 742.7 412.1 759.3 454.5 773.3C495.3 786.8 529.9 797.6 574.6 813.6C632.0 834.1 705.5 863.6 770.0 887.7C832.9 911.2 887.3 932.0 956.8 956.5"/>
<path fill="none" stroke="#343537" stroke-width="1.70" d="M1536.9 612.9C1619.4 635.9 1715.9 665.3 1809.8 694.5C1910.6 725.8 2015.7 760.8 2122.2 795.2M1525.1 619.9C1607.6 643.0 1704.4 672.5 1798.4 701.9C1899.2 733.4 2004.5 768.6 2111.0 803.4M1513.2 627.0C1595.8 650.2 1692.8 679.7 1786.9 709.2C1887.9 740.9 1993.3 776.5 2099.9 811.6M1501.3 634.0C1584.0 657.4 1681.2 686.9 1775.5 716.6C1876.6 748.5 1982.2 784.3 2088.8 819.7M1489.3 641.1C1572.1 664.7 1669.6 694.2 1764.0 724.1C1865.3 756.1 1971.0 792.1 2077.7 827.8M1477.3 648.2C1560.3 671.9 1657.9 701.5 1752.4 731.5C1853.9 763.7 1959.9 799.9 2066.6 835.9M1465.3 655.3C1548.3 679.2 1646.2 708.8 1740.9 739.0C1842.5 771.4 1948.6 807.8 2055.4 844.1M1453.2 662.5C1536.4 686.5 1634.5 716.1 1729.3 746.5C1831.0 779.0 1937.3 815.7 2044.3 852.3M1441.1 669.6C1524.4 693.8 1622.7 723.5 1717.6 754.0C1819.6 786.7 1926.0 823.6 2033.0 860.5M1429.0 676.8C1512.3 701.1 1610.9 730.8 1706.0 761.5C1808.0 794.4 1914.7 831.6 2021.8 868.7M1416.9 684.0C1500.3 708.5 1599.0 738.2 1694.3 769.1C1796.5 802.2 1903.3 839.6 2010.5 877.0M1404.7 691.2C1488.2 715.9 1587.2 745.6 1682.6 776.6C1784.9 809.9 1891.9 847.6 1999.2 885.2M1392.5 698.5C1476.1 723.3 1575.3 753.1 1670.8 784.2C1773.3 817.7 1880.4 855.6 1987.8 893.6M1380.2 705.7C1463.9 730.7 1563.3 760.5 1659.0 791.9C1761.6 825.5 1869.0 863.7 1976.4 901.9M1367.9 713.0C1451.7 738.1 1551.4 768.0 1647.2 799.5C1750.0 833.3 1857.4 871.8 1965.0 910.3M1355.6 720.3C1439.5 745.6 1539.3 775.5 1635.3 807.2C1738.2 841.2 1845.9 879.9 1953.5 918.7M1343.2 727.6C1427.2 753.1 1527.3 783.0 1623.4 814.8C1726.5 849.0 1834.3 888.0 1942.0 927.1M1330.8 735.0C1414.9 760.6 1515.2 790.5 1611.5 822.5C1714.7 856.9 1822.7 896.1 1930.5 935.5M1318.4 742.3C1402.6 768.1 1503.1 798.0 1599.5 830.3C1702.9 864.8 1811.0 904.3 1918.9 944.0M1305.9 749.7C1390.2 775.6 1491.0 805.6 1587.5 838.0C1691.0 872.8 1799.4 912.5 1907.3 952.5M1293.4 757.1C1377.8 783.2 1478.8 813.2 1575.5 845.8C1679.2 880.7 1787.6 920.7 1895.6 961.0M1280.9 764.5C1365.4 790.8 1466.6 820.8 1563.4 853.6C1667.2 888.7 1775.9 929.0 1883.9 969.6M1268.4 771.9C1352.9 798.4 1454.4 828.5 1551.3 861.4C1655.3 896.7 1764.1 937.3 1872.2 978.1M1255.8 779.4C1340.4 806.0 1442.1 836.1 1539.2 869.2C1643.3 904.8 1752.3 945.5 1860.5 986.7M1243.1 786.9C1327.9 813.6 1429.8 843.8 1527.0 877.1C1631.3 912.8 1740.4 953.9 1848.7 995.4M1230.5 794.4C1315.3 821.3 1417.5 851.5 1514.8 885.0C1619.2 920.9 1728.5 962.2 1836.9 1004.0M1217.8 801.9C1302.7 829.0 1405.1 859.2 1502.6 892.9C1607.1 929.0 1716.6 970.6 1825.0 1012.7M1205.0 809.4C1290.1 836.7 1392.7 866.9 1490.3 900.8C1595.0 937.1 1704.6 979.0 1813.1 1021.4M1192.3 817.0C1277.4 844.4 1380.3 874.7 1478.0 908.7C1582.8 945.2 1692.6 987.4 1801.2 1030.1M1179.5 824.6C1264.7 852.2 1367.8 882.5 1465.7 916.7C1570.7 953.4 1680.6 995.8 1789.2 1038.9M1166.7 832.2C1252.0 859.9 1355.3 890.3 1453.3 924.7C1558.4 961.6 1668.5 1004.3 1777.2 1047.7M1153.8 839.8C1239.2 867.7 1342.8 898.1 1440.9 932.7C1546.2 969.8 1656.4 1012.7 1765.2 1056.5M1140.9 847.4C1226.4 875.5 1330.2 905.9 1428.5 940.7C1533.9 978.0 1644.3 1021.2 1753.1 1065.3M1128.0 855.1C1213.6 883.4 1317.6 913.8 1416.0 948.8C1521.6 986.3 1632.1 1029.8 1741.0 1074.2M1115.0 862.8C1200.7 891.2 1304.9 921.7 1403.5 956.8C1509.2 994.6 1619.9 1038.3 1728.8 1083.1M1102.0 870.5C1187.8 899.1 1292.3 929.6 1391.0 964.9C1496.8 1002.9 1607.7 1046.9 1716.6 1092.0M1089.0 878.2C1174.8 907.0 1279.6 937.5 1378.4 973.1C1484.4 1011.2 1595.4 1055.5 1704.4 1101.0M1075.9 885.9C1161.9 914.9 1266.8 945.5 1365.8 981.2C1471.9 1019.5 1583.1 1064.1 1692.2 1109.9M1062.8 893.7C1148.9 922.8 1254.1 953.4 1353.2 989.4C1459.4 1027.9 1570.8 1072.8 1679.9 1118.9M1049.7 901.5C1135.8 930.8 1241.3 961.4 1340.5 997.5C1446.9 1036.3 1558.4 1081.5 1667.5 1127.9M1036.5 909.3C1122.7 938.7 1228.4 969.4 1327.8 1005.7C1434.3 1044.7 1546.0 1090.2 1655.2 1137.0M1023.3 917.1C1109.6 946.7 1215.6 977.4 1315.1 1014.0C1421.7 1053.1 1533.6 1098.9 1642.8 1146.1M1010.1 924.9C1096.5 954.8 1202.7 985.5 1302.3 1022.2C1409.1 1061.6 1521.1 1107.6 1630.3 1155.2M996.8 932.8C1083.3 962.8 1189.7 993.5 1289.5 1030.5C1396.4 1070.1 1508.6 1116.4 1617.9 1164.3M983.5 940.6C1070.1 970.8 1176.8 1001.6 1276.6 1038.8C1383.7 1078.6 1496.1 1125.2 1605.4 1173.4M970.2 948.5C1056.9 978.9 1163.8 1009.7 1263.8 1047.1C1371.0 1087.1 1483.5 1134.0 1592.8 1182.6M956.8 956.5C1043.6 987.0 1150.7 1017.9 1250.9 1055.4C1358.2 1095.6 1470.9 1142.8 1580.3 1191.8"/>
<path fill="none" stroke="#343537" stroke-width="1.50" d="M2122.2 795.2C2233.5 831.3 2355.2 865.4 2463.9 906.2C2566.4 944.6 2693.8 959.9 2757.5 1031.7M2111.0 803.4C2222.3 839.8 2343.8 874.3 2452.4 915.5C2554.9 954.4 2680.8 971.0 2745.9 1042.4M2099.9 811.6C2211.1 848.2 2332.4 883.1 2440.9 924.8C2543.4 964.0 2667.9 982.2 2734.4 1053.0M2088.8 819.7C2200.0 856.6 2321.1 892.0 2429.5 934.0C2532.0 973.7 2654.9 993.4 2723.0 1063.6M2077.7 827.8C2188.9 865.0 2309.9 900.7 2418.2 943.2C2520.6 983.3 2642.0 1004.6 2711.5 1074.1M2066.6 835.9C2177.8 873.4 2298.6 909.5 2406.9 952.3C2509.3 992.8 2629.1 1015.8 2700.2 1084.6M2055.4 844.1C2166.7 881.9 2287.4 918.3 2395.6 961.5C2498.0 1002.3 2616.3 1027.0 2688.9 1095.0M2044.3 852.3C2155.6 890.3 2276.2 927.0 2384.4 970.5C2486.8 1011.8 2603.5 1038.3 2677.6 1105.4M2033.0 860.5C2144.4 898.8 2265.0 935.7 2373.1 979.7C2475.5 1021.3 2590.7 1049.5 2666.4 1115.8M2021.8 868.7C2133.1 907.3 2253.7 944.6 2361.8 988.8C2464.3 1030.8 2578.0 1060.8 2655.2 1126.1M2010.5 877.0C2121.9 915.8 2242.3 953.4 2350.5 998.0C2453.0 1040.3 2565.2 1072.1 2644.0 1136.4M1999.2 885.2C2110.6 924.4 2231.0 962.3 2339.1 1007.2C2441.6 1049.9 2552.4 1083.5 2632.8 1146.8M1987.8 893.6C2099.3 932.9 2219.5 971.2 2327.6 1016.5C2430.2 1059.5 2539.5 1095.0 2621.5 1157.2M1976.4 901.9C2087.9 941.6 2208.1 980.2 2316.1 1025.8C2418.8 1069.2 2526.6 1106.6 2610.1 1167.7M1965.0 910.3C2076.5 950.2 2196.6 989.1 2304.6 1035.1C2407.3 1078.9 2513.6 1118.3 2598.7 1178.2M1953.5 918.7C2065.0 958.9 2185.0 998.2 2293.0 1044.5C2395.8 1088.6 2500.6 1130.1 2587.3 1188.7M1942.0 927.1C2053.5 967.6 2173.4 1007.2 2281.4 1053.9C2384.2 1098.4 2488.2 1141.3 2575.8 1199.3M1930.5 935.5C2042.0 976.3 2161.8 1016.3 2269.8 1063.3C2372.6 1108.2 2475.8 1152.5 2564.3 1210.0M1918.9 944.0C2030.5 985.0 2150.1 1025.4 2258.1 1072.8C2360.9 1118.0 2463.3 1163.8 2552.7 1220.7M1907.3 952.5C2018.9 993.8 2138.4 1034.5 2246.3 1082.3C2349.2 1127.9 2450.8 1175.1 2541.0 1231.4M1895.6 961.0C2007.2 1002.6 2126.7 1043.7 2234.5 1091.9C2337.5 1137.8 2438.3 1186.5 2529.3 1242.2M1883.9 969.6C1995.6 1011.5 2114.9 1052.9 2222.7 1101.5C2325.7 1147.8 2425.7 1197.9 2517.6 1253.0M1872.2 978.1C1983.8 1020.3 2103.1 1062.2 2210.8 1111.1C2313.8 1157.8 2413.1 1209.4 2505.8 1263.9M1860.5 986.7C1972.1 1029.2 2091.2 1071.4 2198.9 1120.7C2301.9 1167.8 2400.5 1220.9 2494.0 1274.8M1848.7 995.4C1960.3 1038.2 2079.3 1080.7 2186.9 1130.4C2290.0 1177.9 2387.8 1232.4 2482.1 1285.8M1836.9 1004.0C1948.5 1047.1 2067.3 1090.1 2174.9 1140.1C2278.0 1188.0 2375.1 1244.0 2470.1 1296.8M1825.0 1012.7C1936.6 1056.1 2055.3 1099.4 2162.9 1149.9C2266.0 1198.2 2362.3 1255.6 2458.1 1307.9M1813.1 1021.4C1924.7 1065.1 2043.3 1108.8 2150.8 1159.7C2253.9 1208.4 2349.5 1267.3 2446.1 1319.0M1801.2 1030.1C1912.8 1074.1 2031.2 1118.3 2138.7 1169.5C2241.8 1218.6 2336.7 1279.0 2434.0 1330.1M1789.2 1038.9C1900.8 1083.2 2019.1 1127.7 2126.5 1179.3C2229.6 1228.9 2323.9 1290.8 2421.9 1341.3M1777.2 1047.7C1888.8 1092.3 2007.0 1137.2 2114.3 1189.2C2217.4 1239.2 2311.0 1302.5 2409.7 1352.6M1765.2 1056.5C1876.8 1101.4 1994.8 1146.8 2102.0 1199.2C2205.1 1249.6 2298.0 1314.4 2397.4 1363.9M1753.1 1065.3C1864.7 1110.6 1982.5 1156.3 2089.7 1209.1C2192.8 1260.0 2285.1 1326.2 2385.1 1375.2M1741.0 1074.2C1852.6 1119.8 1970.2 1165.9 2077.3 1219.1C2180.5 1270.4 2272.1 1338.1 2372.8 1386.6M1728.8 1083.1C1840.4 1129.0 1957.9 1175.5 2064.9 1229.2C2168.1 1280.9 2259.1 1350.0 2360.4 1398.0M1716.6 1092.0C1828.2 1138.2 1945.6 1185.2 2052.5 1239.2C2155.7 1291.4 2246.0 1362.0 2348.0 1409.5M1704.4 1101.0C1816.0 1147.5 1933.2 1194.9 2040.0 1249.4C2143.2 1301.9 2232.9 1374.0 2335.5 1421.0M1692.2 1109.9C1803.7 1156.8 1920.7 1204.6 2027.5 1259.5C2130.6 1312.5 2219.8 1386.0 2322.9 1432.6M1679.9 1118.9C1791.4 1166.1 1908.2 1214.4 2014.9 1269.7C2118.1 1323.1 2206.6 1398.1 2310.4 1444.2M1667.5 1127.9C1779.0 1175.4 1895.7 1224.1 2002.3 1279.9C2105.4 1333.8 2193.4 1410.2 2297.7 1455.9M1655.2 1137.0C1766.7 1184.8 1883.1 1234.0 1989.7 1290.1C2092.8 1344.5 2180.1 1422.4 2285.0 1467.6M1642.8 1146.1C1754.2 1194.2 1870.5 1243.8 1977.0 1300.4C2080.1 1355.2 2166.8 1434.5 2272.3 1479.3M1630.3 1155.2C1741.8 1203.7 1857.9 1253.7 1964.2 1310.7C2067.3 1366.0 2153.5 1446.7 2259.5 1491.1M1617.9 1164.3C1729.3 1213.1 1845.2 1263.6 1951.4 1321.1C2054.5 1376.8 2140.1 1459.0 2246.6 1503.0M1605.4 1173.4C1716.7 1222.6 1832.5 1273.6 1938.6 1331.5C2041.6 1387.7 2126.7 1471.2 2233.8 1514.9M1592.8 1182.6C1704.2 1232.1 1819.7 1283.5 1925.7 1341.9C2028.7 1398.6 2113.3 1483.5 2220.8 1526.8M1580.3 1191.8C1691.6 1241.7 1806.9 1293.6 1912.8 1352.3C2015.8 1409.5 2099.8 1495.9 2207.8 1538.8"/>
<path fill="none" stroke="#343537" stroke-width="1.30" d="M2757.5 1031.7C2820.9 1103.2 2825.6 1265.0 2846.2 1335.4C2857.2 1373.0 2863.0 1393.0 2871.4 1421.8M2745.9 1042.4C2810.2 1112.8 2820.5 1269.5 2843.1 1338.5C2855.3 1375.6 2861.8 1395.5 2871.2 1424.0M2734.4 1053.0C2799.6 1122.3 2815.3 1274.0 2840.0 1341.6C2853.4 1378.2 2860.7 1398.0 2871.0 1426.1M2723.0 1063.6C2789.1 1131.8 2810.2 1278.6 2837.0 1344.7C2851.6 1380.7 2859.5 1400.3 2870.8 1428.1M2711.5 1074.1C2778.7 1141.2 2805.0 1283.2 2833.9 1347.8C2849.7 1383.2 2858.4 1402.6 2870.7 1429.9M2700.2 1084.6C2768.4 1150.6 2799.9 1287.8 2830.9 1350.9C2847.9 1385.6 2857.3 1404.7 2870.5 1431.7M2688.9 1095.0C2758.2 1159.9 2794.8 1292.4 2827.8 1353.9C2846.1 1388.0 2856.2 1406.8 2870.4 1433.2M2677.6 1105.4C2748.0 1169.2 2789.8 1297.1 2824.8 1357.0C2844.3 1390.3 2855.1 1408.8 2870.3 1434.6M2666.4 1115.8C2738.0 1178.5 2784.7 1301.7 2821.8 1360.0C2842.5 1392.5 2854.0 1410.6 2870.1 1435.9M2655.2 1126.1C2728.0 1187.7 2779.7 1306.4 2818.8 1363.0C2840.7 1394.7 2852.9 1412.4 2869.9 1437.1M2644.0 1136.4C2718.1 1196.9 2774.7 1311.1 2815.8 1366.1C2838.8 1396.9 2851.7 1414.1 2869.7 1438.1M2632.8 1146.8C2708.2 1206.1 2769.7 1315.8 2812.8 1369.1C2837.0 1398.9 2850.6 1415.7 2869.5 1439.0M2621.5 1157.2C2698.3 1215.4 2764.7 1320.6 2809.9 1372.1C2835.2 1401.0 2849.4 1417.2 2869.2 1439.7M2610.1 1167.7C2688.4 1224.8 2759.7 1325.4 2806.9 1375.1C2833.3 1402.9 2848.2 1418.6 2868.8 1440.4M2598.7 1178.2C2678.4 1234.1 2754.8 1330.2 2803.9 1378.0C2831.5 1404.9 2846.9 1419.9 2868.4 1440.8M2587.3 1188.7C2668.5 1243.6 2749.9 1335.0 2801.0 1381.0C2829.6 1406.7 2845.6 1421.1 2867.9 1441.2M2575.8 1199.3C2657.9 1253.7 2742.2 1342.6 2794.5 1387.6C2823.6 1412.7 2839.9 1426.8 2862.6 1446.3M2564.3 1210.0C2647.3 1263.9 2734.5 1350.3 2787.9 1394.3C2817.6 1418.8 2834.2 1432.4 2857.3 1451.5M2552.7 1220.7C2636.7 1274.1 2726.8 1358.0 2781.2 1401.0C2811.5 1424.9 2828.3 1438.1 2851.9 1456.7M2541.0 1231.4C2626.0 1284.4 2719.0 1365.8 2774.5 1407.7C2805.3 1431.0 2822.4 1443.9 2846.3 1462.0M2529.3 1242.2C2615.2 1294.7 2711.1 1373.6 2767.7 1414.6C2799.0 1437.2 2816.4 1449.7 2840.7 1467.3M2517.6 1253.0C2604.4 1305.1 2703.3 1381.5 2760.9 1421.4C2792.7 1443.4 2810.3 1455.6 2834.9 1472.6M2505.8 1263.9C2593.6 1315.5 2695.4 1389.5 2754.1 1428.3C2786.4 1449.7 2804.1 1461.5 2829.1 1478.0M2494.0 1274.8C2582.7 1326.0 2687.4 1397.4 2747.2 1435.3C2779.9 1456.1 2797.8 1467.4 2823.2 1483.5M2482.1 1285.8C2571.8 1336.6 2679.4 1405.5 2740.2 1442.3C2773.4 1462.5 2791.5 1473.5 2817.2 1489.0M2470.1 1296.8C2560.8 1347.2 2671.4 1413.6 2733.2 1449.4C2766.8 1468.9 2785.1 1479.5 2811.0 1494.6M2458.1 1307.9C2549.8 1357.8 2663.3 1421.7 2726.1 1456.6C2760.1 1475.4 2778.6 1485.7 2804.8 1500.2M2446.1 1319.0C2538.8 1368.6 2655.2 1429.9 2719.0 1463.7C2753.4 1482.0 2772.0 1491.9 2798.5 1505.9M2434.0 1330.1C2527.7 1379.3 2647.1 1438.1 2711.8 1471.0C2746.6 1488.6 2765.3 1498.1 2792.1 1511.7M2421.9 1341.3C2516.5 1390.2 2638.9 1446.4 2704.6 1478.3C2739.8 1495.3 2758.6 1504.4 2785.6 1517.5M2409.7 1352.6C2505.3 1401.1 2630.7 1454.8 2697.3 1485.6C2732.9 1502.0 2751.8 1510.8 2779.0 1523.4M2397.4 1363.9C2494.1 1412.0 2622.4 1463.2 2690.0 1493.0C2725.9 1508.8 2744.9 1517.2 2772.3 1529.3M2385.1 1375.2C2482.8 1423.0 2614.1 1471.6 2682.6 1500.4C2718.8 1515.7 2737.9 1523.7 2765.6 1535.4M2372.8 1386.6C2471.5 1434.1 2605.7 1480.1 2675.2 1507.9C2711.7 1522.6 2730.9 1530.3 2758.7 1541.5M2360.4 1398.0C2460.1 1445.2 2597.4 1488.6 2667.7 1515.5C2704.5 1529.6 2723.7 1536.9 2751.8 1547.6M2348.0 1409.5C2448.6 1456.4 2588.9 1497.2 2660.2 1523.1C2697.3 1536.6 2716.6 1543.6 2744.7 1553.9M2335.5 1421.0C2437.1 1467.6 2580.5 1505.8 2652.6 1530.8C2689.9 1543.7 2709.3 1550.4 2737.6 1560.2M2322.9 1432.6C2425.6 1478.9 2571.9 1514.5 2644.9 1538.5C2682.6 1550.8 2701.9 1557.2 2730.4 1566.6M2310.4 1444.2C2414.0 1490.3 2563.4 1523.2 2637.2 1546.2C2675.1 1558.0 2694.5 1564.1 2723.2 1573.0M2297.7 1455.9C2402.4 1501.7 2554.8 1531.9 2629.5 1554.0C2667.6 1565.3 2687.0 1571.1 2715.8 1579.6M2285.0 1467.6C2390.7 1513.2 2546.2 1540.7 2621.7 1561.9C2660.0 1572.6 2679.5 1578.1 2708.4 1586.2M2272.3 1479.3C2379.0 1524.7 2537.5 1549.6 2613.9 1569.8C2652.4 1580.0 2671.9 1585.2 2700.9 1592.9M2259.5 1491.1C2367.2 1536.3 2528.8 1558.5 2606.0 1577.8C2644.7 1587.5 2664.2 1592.4 2693.3 1599.6M2246.6 1503.0C2355.3 1547.9 2520.0 1567.4 2598.0 1585.8C2637.0 1595.0 2656.4 1599.6 2685.6 1606.5M2233.8 1514.9C2343.4 1559.6 2511.2 1576.4 2590.0 1593.9C2629.1 1602.6 2648.6 1606.9 2677.9 1613.4M2220.8 1526.8C2331.5 1571.3 2502.3 1585.4 2581.9 1602.0C2621.3 1610.2 2640.7 1614.3 2670.1 1620.4M2207.8 1538.8C2319.5 1583.2 2493.5 1594.5 2573.8 1610.2C2613.3 1617.9 2632.7 1621.7 2662.2 1627.4"/>
<path fill="none" stroke="#343537" stroke-width="1.7" d="M862.3 470.1C910.8 478.3 960.6 486.1 1007.8 494.6C1052.9 502.8 1091.0 509.8 1139.8 520.1C1200.9 533.1 1279.5 550.6 1345.7 567.8C1407.9 583.9 1460.1 599.3 1525.7 619.6C1605.6 644.3 1700.6 674.0 1790.4 707.0C1885.6 742.1 1983.7 782.4 2081.0 825.3C2181.8 869.8 2287.9 918.5 2384.9 970.1C2478.2 1019.7 2563.6 1075.5 2653.0 1128.1M856.6 472.9C905.1 481.1 954.8 488.9 1002.0 497.5C1047.1 505.7 1085.2 512.8 1133.9 523.2C1195.0 536.2 1273.6 553.9 1339.7 571.1C1401.9 587.3 1454.2 602.8 1519.7 623.1C1599.7 647.9 1694.8 677.6 1784.6 710.7C1879.9 745.9 1978.1 786.3 2075.5 829.4C2176.3 874.0 2282.3 922.9 2379.3 974.6C2472.6 1024.4 2558.0 1080.4 2647.4 1133.3"/>
<path fill="none" stroke="#3a3b3d" stroke-opacity=".75" stroke-width="7" d="M2793.7 1220.0C2798.7 1230.0 2805.2 1239.3 2808.7 1250.0C2812.4 1261.1 2814.0 1273.6 2815.0 1285.5C2816.0 1297.2 2816.0 1309.0 2815.0 1320.7C2814.0 1332.5 2811.3 1345.3 2808.7 1356.0C2806.5 1365.1 2803.2 1372.0 2801.0 1381.0C2798.5 1391.1 2797.4 1403.3 2795.0 1413.7C2792.8 1423.3 2790.2 1432.1 2787.4 1441.0C2784.7 1449.7 2781.5 1457.9 2778.6 1466.4"/>
<path fill="none" stroke="#2c2d2f" stroke-opacity=".85" stroke-width="9" d="M2801.0 1381.0C2799.0 1391.9 2797.4 1403.3 2795.0 1413.7C2792.8 1423.3 2790.2 1432.1 2787.4 1441.0C2784.7 1449.7 2781.5 1457.9 2778.6 1466.4"/>
<path fill="none" stroke="#343537" stroke-width="1.3" d="M2602.9 1093.8C2621.6 1105.6 2640.1 1116.8 2659.0 1129.1C2678.8 1141.9 2700.3 1156.2 2719.1 1169.1C2736.0 1180.7 2753.6 1193.1 2766.7 1202.9C2776.3 1210.1 2784.5 1214.2 2790.9 1222.1C2797.6 1230.2 2802.3 1240.8 2805.9 1251.2C2809.6 1262.0 2811.3 1274.2 2812.5 1285.8C2813.7 1297.3 2813.9 1308.8 2813.1 1320.4C2812.2 1332.1 2809.8 1344.8 2807.5 1355.4C2805.5 1364.6 2802.8 1372.2 2800.5 1380.6M2605.8 1100.6C2623.8 1112.0 2641.7 1122.8 2660.0 1134.7C2679.1 1147.0 2700.0 1160.8 2718.2 1173.3C2734.5 1184.5 2751.6 1196.3 2764.4 1205.8C2773.7 1212.7 2781.8 1216.6 2788.2 1224.3C2794.8 1232.1 2799.5 1242.3 2803.1 1252.4C2806.9 1262.8 2808.7 1274.8 2810.0 1286.1C2811.3 1297.3 2811.7 1308.7 2811.1 1320.1C2810.5 1331.6 2808.3 1344.2 2806.2 1354.8C2804.4 1364.0 2802.0 1371.8 2799.9 1380.2M2609.0 1108.3C2626.4 1119.2 2643.5 1129.6 2661.2 1141.0C2679.6 1152.8 2699.6 1166.0 2717.1 1177.9C2732.9 1188.7 2749.4 1200.0 2761.8 1209.1C2770.9 1215.6 2778.8 1219.4 2785.1 1226.7C2791.6 1234.2 2796.3 1244.0 2799.9 1253.7C2803.8 1263.8 2805.7 1275.4 2807.2 1286.4C2808.7 1297.4 2809.3 1308.5 2808.9 1319.7C2808.5 1331.1 2806.6 1343.6 2804.8 1354.2C2803.3 1363.4 2801.2 1371.2 2799.3 1379.8M2612.6 1116.8C2629.2 1127.2 2645.6 1137.2 2662.4 1148.0C2680.0 1159.2 2699.2 1171.8 2716.0 1183.1C2731.2 1193.3 2747.0 1204.1 2759.0 1212.7C2767.8 1218.9 2775.4 1222.4 2781.6 1229.3C2788.0 1236.5 2792.7 1245.8 2796.4 1255.2C2800.3 1264.9 2802.4 1276.1 2804.1 1286.8C2805.8 1297.5 2806.6 1308.3 2806.5 1319.3C2806.4 1330.5 2804.7 1342.9 2803.2 1353.4C2802.0 1362.7 2800.2 1370.7 2798.7 1379.3"/>
<path fill="none" stroke="#3a3b3d" stroke-opacity=".6" stroke-width="3.5" d="M2480.0 1011.0C2539.3 1048.5 2605.9 1089.1 2658.0 1123.5C2699.7 1151.0 2745.5 1182.4 2769.0 1200.0C2780.4 1208.5 2787.1 1211.8 2793.7 1220.0C2800.5 1228.4 2805.2 1239.3 2808.7 1250.0C2812.4 1261.1 2814.0 1273.6 2815.0 1285.5C2816.0 1297.2 2816.0 1309.0 2815.0 1320.7C2814.0 1332.5 2811.3 1345.3 2808.7 1356.0C2806.5 1365.1 2803.2 1372.0 2801.0 1381.0C2798.5 1391.1 2797.4 1403.3 2795.0 1413.7C2792.8 1423.3 2790.2 1432.1 2787.4 1441.0C2784.7 1449.7 2781.5 1457.9 2778.6 1466.4"/>
<polygon points="266 453 279 455 279 468 266 466" fill="#a0a1a4" stroke="#55565a" stroke-width=".8"/>
<polygon points="280 457 311 461 311 473 280 469" fill="#a0a1a4" stroke="#55565a" stroke-width=".8"/>
<polygon points="312 464 343 469 343 478 312 474" fill="#a0a1a4" stroke="#55565a" stroke-width=".8"/>
<polygon points="344 471 415 484 405 489.5 344 480" fill="#a0a1a4" stroke="#55565a" stroke-width=".8"/>
<polygon points="585 448 600 444 611 441 635 441 684 450 684 467 640 461 600 452" fill="#a0a1a4" stroke="#55565a" stroke-width=".8"/>
<polygon points="685 450 740 456 785 466 760 469 685 464" fill="#a0a1a4" stroke="#55565a" stroke-width=".8"/>
<path d="M-74.0 567.0C-40.2 578.1 -6.4 589.2 27.4 600.4C61.2 611.6 95.3 622.9 128.6 634.0C161.1 644.8 191.6 652.7 225.0 666.0C263.0 681.1 304.3 704.1 344.0 721.6C383.0 738.8 422.2 754.5 461.0 770.0C499.0 785.2 531.6 797.2 574.6 813.6C630.9 835.1 704.8 864.4 770.0 887.7C834.4 910.7 891.6 929.5 963.5 952.5C1053.2 981.2 1162.1 1011.7 1267.0 1045.0C1380.7 1081.1 1501.3 1122.6 1621.0 1162.0C1744.2 1202.6 1876.9 1238.0 1996.0 1285.0C2109.3 1329.7 2245.2 1403.3 2319.8 1435.5C2358.5 1452.2 2378.2 1461.9 2409.0 1471.0C2440.2 1480.2 2479.8 1485.4 2505.6 1490.2C2522.8 1493.4 2534.6 1496.0 2548.6 1497.8C2561.8 1499.5 2573.1 1500.7 2587.3 1501.0C2604.7 1501.4 2627.3 1500.3 2645.3 1498.8C2661.2 1497.5 2675.2 1495.9 2690.0 1493.0C2705.1 1490.0 2720.2 1485.8 2735.0 1481.0C2749.7 1476.3 2764.0 1470.0 2778.5 1464.5L2778.5 1464.6C2764.0 1470.2 2749.8 1476.4 2735.0 1481.4C2720.1 1486.4 2704.8 1491.2 2689.5 1494.5C2674.2 1497.9 2659.7 1499.7 2643.2 1501.6C2624.6 1503.7 2601.2 1506.1 2583.4 1506.3C2569.1 1506.4 2557.8 1505.5 2544.6 1504.0C2530.7 1502.4 2519.0 1500.1 2502.1 1496.9C2476.5 1492.2 2437.6 1486.4 2406.6 1477.2C2375.7 1468.0 2355.6 1458.2 2316.5 1441.6C2241.4 1409.8 2104.4 1338.3 1990.9 1294.0C1871.7 1247.4 1739.5 1211.3 1616.6 1170.6C1497.4 1131.1 1377.3 1089.8 1264.2 1053.4C1159.7 1019.8 1051.3 988.6 962.0 959.5C890.2 936.1 833.2 916.8 768.8 893.5C703.8 869.9 630.1 840.7 573.8 818.9C530.8 802.3 498.2 789.8 460.2 774.4C421.5 758.6 382.5 742.7 343.6 725.3C303.9 707.5 262.5 684.4 224.6 668.6C191.2 654.7 161.1 645.3 128.6 634.0C95.4 622.5 61.2 611.6 27.4 600.4C-6.4 589.2 -40.2 578.1 -74.0 567.0Z" fill="rgb(154,155,158)"/>
<path d="M-74.0 567.0C-40.2 578.1 -6.4 589.2 27.4 600.4C61.2 611.6 95.4 622.6 128.6 634.0C161.1 645.1 191.3 654.2 224.7 668.0C262.6 683.6 304.0 706.7 343.7 724.4C382.6 741.8 421.7 757.6 460.4 773.3C498.4 788.7 531.0 801.1 574.0 817.6C630.3 839.4 704.0 868.6 769.1 892.1C833.5 915.3 890.6 934.5 962.3 957.8C1051.8 986.8 1160.3 1017.9 1264.9 1051.4C1378.1 1087.7 1498.3 1129.0 1617.7 1168.5C1740.6 1209.1 1872.9 1245.1 1992.1 1291.8C2105.6 1336.2 2242.3 1408.2 2317.3 1440.1C2356.3 1456.7 2376.3 1466.5 2407.2 1475.7C2438.2 1484.9 2477.3 1490.5 2502.9 1495.3C2519.9 1498.5 2531.6 1500.9 2545.6 1502.5C2558.8 1504.0 2570.0 1505.0 2584.3 1505.0C2602.0 1505.0 2625.2 1502.9 2643.7 1500.9C2660.0 1499.1 2674.5 1497.4 2689.6 1494.2C2704.9 1490.9 2720.1 1486.3 2735.0 1481.3C2749.8 1476.4 2764.0 1470.1 2778.5 1464.6L2778.5 1464.6C2764.0 1470.3 2749.8 1476.6 2735.0 1481.7C2720.0 1486.9 2704.7 1492.1 2689.1 1495.7C2673.6 1499.4 2658.5 1501.4 2641.6 1503.7C2622.6 1506.3 2598.6 1509.7 2580.4 1510.3C2566.0 1510.8 2554.7 1510.0 2541.6 1508.7C2527.7 1507.3 2516.2 1505.2 2499.4 1502.1C2474.1 1497.4 2435.6 1491.1 2404.8 1481.9C2373.8 1472.6 2353.4 1462.7 2314.0 1446.2C2238.6 1414.7 2100.8 1344.8 1987.0 1300.7C1867.7 1254.6 1735.9 1217.8 1613.3 1177.1C1494.4 1137.5 1374.8 1096.4 1262.0 1059.8C1157.9 1026.0 1049.9 994.2 960.8 964.8C889.2 941.0 832.2 921.4 767.9 897.9C703.0 874.1 629.4 845.0 573.3 823.0C530.3 806.2 497.6 793.4 459.6 777.7C421.0 761.8 382.1 745.7 343.3 728.1C303.6 710.1 262.1 687.0 224.3 670.6C191.0 656.2 161.1 645.6 128.6 634.0C95.5 622.2 61.2 611.6 27.4 600.4C-6.4 589.2 -40.2 578.1 -74.0 567.0Z" fill="rgb(164,165,168)"/>
<path d="M-74.0 567.0C-40.2 578.1 -6.4 589.2 27.4 600.4C61.2 611.6 95.4 622.3 128.6 634.0C161.1 645.5 191.1 655.7 224.4 670.0C262.2 686.2 303.7 709.3 343.4 727.2C382.2 744.8 421.2 760.8 459.8 776.6C497.8 792.2 530.4 804.9 573.4 821.7C629.6 843.6 703.2 872.8 768.2 896.5C832.5 919.9 889.5 939.5 961.2 963.1C1050.3 992.4 1158.5 1024.0 1262.7 1057.8C1375.6 1094.3 1495.3 1135.5 1614.4 1175.0C1737.1 1215.7 1869.0 1252.3 1988.2 1298.6C2102.0 1342.7 2239.5 1413.1 2314.8 1444.8C2354.1 1461.3 2374.4 1471.1 2405.4 1480.4C2436.2 1489.6 2474.9 1495.7 2500.2 1500.4C2517.1 1503.6 2528.7 1505.8 2542.5 1507.2C2555.7 1508.6 2567.0 1509.4 2581.4 1509.0C2599.4 1508.5 2623.2 1505.5 2642.1 1503.0C2658.9 1500.8 2673.8 1498.9 2689.2 1495.3C2704.7 1491.8 2720.0 1486.8 2735.0 1481.6C2749.8 1476.5 2764.0 1470.3 2778.5 1464.6L2778.5 1464.7C2764.0 1470.5 2749.8 1476.7 2735.0 1482.0C2719.9 1487.5 2704.5 1492.9 2688.8 1496.9C2672.9 1500.9 2657.3 1503.0 2640.1 1505.8C2620.5 1508.9 2595.9 1513.2 2577.5 1514.3C2563.0 1515.1 2551.7 1514.5 2538.5 1513.4C2524.8 1512.2 2513.3 1510.2 2496.7 1507.2C2471.6 1502.6 2433.7 1495.9 2403.0 1486.6C2371.9 1477.2 2351.2 1467.3 2311.5 1450.9C2235.7 1419.5 2097.1 1351.2 1983.1 1307.5C1863.7 1261.7 1732.4 1224.4 1610.0 1183.6C1491.4 1144.0 1372.2 1103.0 1259.9 1066.2C1156.1 1032.1 1048.5 999.9 959.7 970.0C888.2 946.0 831.2 925.9 767.1 902.2C702.2 878.3 628.7 849.3 572.7 827.0C529.7 810.0 497.0 796.9 459.0 781.0C420.5 764.9 381.7 748.8 343.0 730.9C303.3 712.7 261.7 689.5 224.0 672.6C190.7 657.7 161.1 645.9 128.6 634.0C95.6 621.8 61.2 611.6 27.4 600.4C-6.4 589.2 -40.2 578.1 -74.0 567.0Z" fill="rgb(170,171,174)"/>
<path d="M-74.0 567.0C-40.2 578.1 -6.4 589.2 27.4 600.4C61.2 611.6 95.5 621.9 128.6 634.0C161.1 645.8 190.8 657.2 224.1 672.0C261.8 688.7 303.4 711.9 343.1 730.0C381.8 747.8 420.6 763.9 459.2 779.9C497.2 795.8 529.9 808.8 572.9 825.8C629.0 847.9 702.5 877.0 767.3 900.8C831.5 924.5 888.5 944.4 960.0 968.3C1048.9 998.1 1156.7 1030.2 1260.6 1064.1C1373.1 1100.9 1492.4 1141.9 1611.1 1181.5C1733.5 1222.3 1865.0 1259.5 1984.4 1305.4C2098.3 1349.2 2236.6 1418.0 2312.3 1449.4C2351.9 1465.8 2372.5 1475.7 2403.6 1485.1C2434.3 1494.4 2472.4 1500.9 2497.5 1505.5C2514.2 1508.6 2525.7 1510.7 2539.5 1511.9C2552.7 1513.1 2564.0 1513.7 2578.4 1513.0C2596.8 1512.1 2621.2 1508.1 2640.6 1505.1C2657.7 1502.5 2673.1 1500.4 2688.9 1496.5C2704.6 1492.6 2719.9 1487.3 2735.0 1481.9C2749.8 1476.7 2764.0 1470.4 2778.5 1464.7L2778.5 1464.8C2764.0 1470.6 2749.8 1476.9 2735.0 1482.3C2719.8 1488.0 2704.3 1493.8 2688.4 1498.0C2672.2 1502.4 2656.2 1504.7 2638.5 1507.9C2618.5 1511.5 2593.3 1516.8 2574.5 1518.3C2560.0 1519.4 2548.7 1519.1 2535.5 1518.1C2521.8 1517.1 2510.5 1515.3 2494.0 1512.3C2469.1 1507.7 2431.7 1500.6 2401.2 1491.2C2370.1 1481.7 2349.0 1471.8 2309.1 1455.5C2232.8 1424.4 2093.5 1357.7 1979.3 1314.3C1859.8 1268.9 1728.8 1231.0 1606.7 1190.1C1488.4 1150.4 1369.7 1109.6 1257.8 1072.5C1154.3 1038.3 1047.1 1005.5 958.5 975.3C887.1 951.0 830.3 930.5 766.2 906.6C701.4 882.5 628.1 853.5 572.1 831.1C529.1 813.9 496.4 800.4 458.5 784.3C420.0 768.0 381.3 751.8 342.6 733.8C303.0 715.3 261.3 692.0 223.7 674.6C190.4 659.2 161.0 646.3 128.6 634.0C95.6 621.5 61.2 611.6 27.4 600.4C-6.4 589.2 -40.2 578.1 -74.0 567.0Z" fill="rgb(176,177,180)"/>
<path d="M-74.0 567.0C-40.2 578.1 -6.4 589.2 27.4 600.4C61.2 611.6 95.6 621.6 128.6 634.0C161.0 646.2 190.5 658.8 223.8 674.0C261.5 691.2 303.1 714.4 342.8 732.9C381.4 750.8 420.1 767.0 458.6 783.2C496.6 799.3 529.3 812.6 572.3 829.8C628.3 852.2 701.7 881.1 766.5 905.2C830.6 929.1 887.5 949.4 958.9 973.6C1047.5 1003.7 1154.9 1036.3 1258.5 1070.5C1370.5 1107.5 1489.4 1148.4 1607.8 1188.0C1730.0 1228.9 1861.0 1266.6 1980.5 1312.2C2094.6 1355.7 2233.8 1422.9 2309.9 1454.0C2349.7 1470.4 2370.7 1480.3 2401.8 1489.8C2432.3 1499.1 2469.9 1506.1 2494.8 1510.7C2511.4 1513.7 2522.8 1515.6 2536.4 1516.6C2549.6 1517.6 2560.9 1518.0 2575.5 1517.0C2594.1 1515.7 2619.2 1510.7 2639.0 1507.2C2656.5 1504.2 2672.4 1501.9 2688.5 1497.7C2704.4 1493.5 2719.8 1487.8 2735.0 1482.2C2749.8 1476.8 2764.0 1470.6 2778.5 1464.8L2778.5 1464.8C2764.0 1470.8 2749.9 1477.0 2735.0 1482.7C2719.7 1488.5 2704.2 1494.7 2688.0 1499.2C2671.5 1503.9 2655.0 1506.4 2636.9 1510.0C2616.5 1514.1 2590.6 1520.4 2571.6 1522.3C2556.9 1523.7 2545.6 1523.6 2532.4 1522.8C2518.9 1522.0 2507.6 1520.4 2491.3 1517.4C2466.6 1512.9 2429.8 1505.3 2399.4 1495.9C2368.2 1486.3 2346.9 1476.4 2306.6 1460.1C2230.0 1429.3 2089.8 1364.2 1975.4 1321.1C1855.8 1276.1 1725.3 1237.6 1603.4 1196.6C1485.5 1156.9 1367.2 1116.2 1255.6 1078.9C1152.5 1044.5 1045.7 1011.1 957.3 980.6C886.1 956.0 829.3 935.1 765.3 911.0C700.7 886.7 627.4 857.8 571.5 835.1C528.5 817.7 495.8 803.9 457.9 787.6C419.4 771.1 380.9 754.8 342.3 736.6C302.7 717.8 260.9 694.5 223.3 676.6C190.1 660.8 161.0 646.6 128.6 634.0C95.7 621.2 61.2 611.6 27.4 600.4C-6.4 589.2 -40.2 578.1 -74.0 567.0Z" fill="rgb(180,181,184)"/>
<path d="M-74.0 567.0C-40.2 578.1 -6.4 589.2 27.4 600.4C61.2 611.6 95.7 621.3 128.6 634.0C161.0 646.5 190.2 660.3 223.4 675.9C261.1 693.7 302.8 717.0 342.4 735.7C381.0 753.8 419.6 770.1 458.1 786.6C496.0 802.8 528.7 816.5 571.7 833.9C627.6 856.4 700.9 885.3 765.6 909.6C829.6 933.7 886.4 954.4 957.7 978.9C1046.1 1009.3 1153.0 1042.5 1256.3 1076.9C1368.0 1114.1 1486.4 1154.8 1604.4 1194.5C1726.4 1235.5 1857.1 1273.8 1976.6 1318.9C2091.0 1362.1 2230.9 1427.7 2307.4 1458.7C2347.6 1474.9 2368.8 1484.9 2399.9 1494.4C2430.4 1503.8 2467.4 1511.3 2492.2 1515.8C2508.6 1518.8 2519.8 1520.4 2533.4 1521.3C2546.6 1522.1 2557.9 1522.4 2572.5 1521.0C2591.5 1519.2 2617.1 1513.2 2637.4 1509.3C2655.4 1505.9 2671.7 1503.4 2688.1 1498.8C2704.2 1494.4 2719.7 1488.3 2735.0 1482.6C2749.9 1477.0 2764.0 1470.7 2778.5 1464.8L2778.5 1464.9C2764.0 1470.9 2749.9 1477.2 2735.0 1483.0C2719.6 1489.0 2704.0 1495.6 2687.6 1500.4C2670.8 1505.3 2653.8 1508.1 2635.3 1512.1C2614.4 1516.7 2588.0 1523.9 2568.6 1526.3C2553.9 1528.1 2542.6 1528.1 2529.4 1527.5C2515.9 1526.9 2504.8 1525.4 2488.6 1522.5C2464.2 1518.1 2427.8 1510.0 2397.5 1500.6C2366.3 1490.9 2344.7 1480.9 2304.1 1464.8C2227.1 1434.2 2086.2 1370.7 1971.5 1327.9C1851.8 1283.2 1721.7 1244.2 1600.1 1203.1C1482.5 1163.4 1364.6 1122.8 1253.5 1085.3C1150.6 1050.6 1044.3 1016.8 956.2 985.9C885.1 960.9 828.3 939.7 764.4 915.4C699.9 890.8 626.8 862.0 570.9 839.2C527.9 821.6 495.2 807.5 457.3 790.9C418.9 774.2 380.5 757.8 342.0 739.4C302.4 720.4 260.5 697.0 223.0 678.6C189.9 662.3 161.0 647.0 128.6 634.0C95.8 620.9 61.2 611.6 27.4 600.4C-6.4 589.2 -40.2 578.1 -74.0 567.0Z" fill="rgb(179,180,183)"/>
<path d="M-74.0 567.0C-40.2 578.1 -6.4 589.2 27.4 600.4C61.2 611.6 95.8 621.0 128.6 634.0C161.0 646.9 190.0 661.8 223.1 677.9C260.7 696.2 302.5 719.6 342.1 738.5C380.6 756.8 419.1 773.2 457.5 789.9C495.4 806.3 528.1 820.4 571.1 837.9C627.0 860.7 700.1 889.5 764.7 914.0C828.6 938.3 885.4 959.3 956.6 984.2C1044.7 1015.0 1151.2 1048.6 1254.2 1083.2C1365.4 1120.6 1483.5 1161.3 1601.1 1201.0C1722.8 1242.1 1853.1 1280.9 1972.8 1325.7C2087.3 1368.6 2228.0 1432.6 2304.9 1463.3C2345.4 1479.5 2366.9 1489.4 2398.1 1499.1C2428.4 1508.5 2465.0 1516.4 2489.5 1520.9C2505.7 1523.8 2516.9 1525.3 2530.4 1526.0C2543.6 1526.7 2554.9 1526.7 2569.6 1525.0C2588.8 1522.8 2615.1 1515.8 2635.8 1511.4C2654.2 1507.5 2671.0 1504.9 2687.8 1500.0C2704.0 1495.3 2719.6 1488.8 2735.0 1482.9C2749.9 1477.1 2764.0 1470.9 2778.5 1464.9L2778.5 1465.0C2764.0 1471.1 2749.9 1477.3 2735.0 1483.3C2719.5 1489.5 2703.8 1496.5 2687.3 1501.6C2670.1 1506.8 2652.6 1509.7 2633.7 1514.2C2612.4 1519.3 2585.4 1527.5 2565.7 1530.3C2550.9 1532.4 2539.5 1532.6 2526.4 1532.2C2513.0 1531.8 2502.0 1530.5 2485.9 1527.6C2461.7 1523.3 2425.8 1514.7 2395.7 1505.3C2364.4 1495.5 2342.5 1485.4 2301.6 1469.4C2224.3 1439.1 2082.5 1377.2 1967.6 1334.7C1847.9 1290.4 1718.1 1250.8 1596.8 1209.6C1479.5 1169.8 1362.1 1129.3 1251.4 1091.7C1148.8 1056.8 1042.9 1022.4 955.0 991.2C884.0 965.9 827.4 944.3 763.5 919.8C699.1 895.0 626.1 866.3 570.3 843.2C527.3 825.5 494.6 811.0 456.7 794.2C418.4 777.3 380.1 760.8 341.7 742.2C302.1 723.0 260.1 699.5 222.7 680.5C189.6 663.8 161.0 647.3 128.6 634.0C95.9 620.6 61.2 611.6 27.4 600.4C-6.4 589.2 -40.2 578.1 -74.0 567.0Z" fill="rgb(178,179,182)"/>
<path d="M-74.0 567.0C-40.2 578.1 -6.4 589.2 27.4 600.4C61.2 611.6 95.9 620.7 128.6 634.0C161.0 647.2 189.7 663.3 222.8 679.9C260.3 698.7 302.2 722.2 341.8 741.3C380.2 759.9 418.6 776.3 456.9 793.2C494.8 809.9 527.5 824.2 570.5 842.0C626.3 864.9 699.4 893.7 763.8 918.4C827.7 942.8 884.4 964.3 955.4 989.5C1043.3 1020.6 1149.4 1054.8 1252.0 1089.6C1362.9 1127.2 1480.5 1167.7 1597.8 1207.5C1719.3 1248.7 1849.1 1288.1 1968.9 1332.5C2083.7 1375.1 2225.2 1437.5 2302.4 1467.9C2343.2 1484.0 2365.0 1494.0 2396.3 1503.8C2426.5 1513.2 2462.5 1521.6 2486.8 1526.0C2502.9 1528.9 2513.9 1530.2 2527.3 1530.7C2540.5 1531.2 2551.9 1531.0 2566.6 1529.0C2586.2 1526.4 2613.1 1518.4 2634.2 1513.5C2653.0 1509.2 2670.3 1506.4 2687.4 1501.2C2703.9 1496.2 2719.5 1489.3 2735.0 1483.2C2749.9 1477.3 2764.0 1471.0 2778.5 1464.9L2778.6 1465.0C2764.0 1471.2 2749.9 1477.5 2735.0 1483.6C2719.4 1490.0 2703.6 1497.3 2686.9 1502.7C2669.4 1508.3 2651.5 1511.4 2632.1 1516.3C2610.4 1521.8 2582.7 1531.1 2562.7 1534.3C2547.9 1536.7 2536.5 1537.1 2523.3 1536.9C2510.0 1536.7 2499.1 1535.6 2483.2 1532.7C2459.2 1528.5 2423.9 1519.5 2393.9 1510.0C2362.5 1500.1 2340.3 1490.0 2299.1 1474.0C2221.4 1443.9 2078.9 1383.7 1963.8 1341.5C1843.9 1297.5 1714.6 1257.4 1593.4 1216.1C1476.6 1176.3 1359.6 1135.9 1249.2 1098.0C1147.0 1062.9 1041.5 1028.0 953.9 996.4C883.0 970.9 826.4 948.9 762.6 924.2C698.4 899.2 625.4 870.6 569.8 847.3C526.7 829.3 494.0 814.5 456.1 797.6C417.9 780.4 379.7 763.8 341.4 745.0C301.8 725.6 259.7 702.0 222.4 682.5C189.3 665.3 161.0 647.7 128.6 634.0C96.0 620.3 61.2 611.6 27.4 600.4C-6.4 589.2 -40.2 578.1 -74.0 567.0Z" fill="rgb(171,172,175)"/>
<path d="M-74.0 567.0C-40.2 578.1 -6.4 589.2 27.4 600.4C61.2 611.6 96.0 620.4 128.6 634.0C161.0 647.6 189.4 664.8 222.5 681.9C259.9 701.2 301.9 724.7 341.5 744.1C379.9 762.9 418.1 779.4 456.3 796.5C494.2 813.4 526.9 828.1 570.0 846.0C625.6 869.2 698.6 897.9 762.9 922.8C826.7 947.4 883.3 969.3 954.2 994.8C1041.9 1026.2 1147.6 1061.0 1249.9 1096.0C1360.4 1133.8 1477.5 1174.2 1594.5 1214.0C1715.7 1255.3 1845.2 1295.2 1965.0 1339.3C2080.0 1381.6 2222.3 1442.4 2299.9 1472.5C2341.0 1488.5 2363.1 1498.6 2394.5 1508.5C2424.5 1517.9 2460.0 1526.8 2484.1 1531.1C2500.0 1533.9 2511.0 1535.1 2524.3 1535.4C2537.5 1535.7 2548.8 1535.3 2563.7 1533.0C2583.6 1529.9 2611.0 1521.0 2632.7 1515.7C2651.8 1510.9 2669.6 1507.9 2687.0 1502.3C2703.7 1497.1 2719.4 1489.9 2735.0 1483.5C2749.9 1477.4 2764.0 1471.2 2778.6 1465.0L2778.6 1465.1C2764.0 1471.4 2749.9 1477.6 2735.0 1483.9C2719.3 1490.5 2703.4 1498.2 2686.5 1503.9C2668.7 1509.8 2650.3 1513.1 2630.6 1518.4C2608.3 1524.4 2580.1 1534.6 2559.7 1538.3C2544.8 1541.0 2533.5 1541.7 2520.3 1541.6C2507.1 1541.5 2496.3 1540.6 2480.6 1537.8C2456.8 1533.6 2421.9 1524.2 2392.1 1514.7C2360.6 1504.7 2338.1 1494.5 2296.6 1478.7C2218.6 1448.8 2075.2 1390.2 1959.9 1348.3C1840.0 1304.7 1711.0 1263.9 1590.1 1222.6C1473.6 1182.7 1357.0 1142.5 1247.1 1104.4C1145.2 1069.1 1040.1 1033.7 952.7 1001.7C882.0 975.8 825.4 953.5 761.7 928.5C697.6 903.4 624.8 874.8 569.2 851.3C526.1 833.2 493.4 818.1 455.5 800.9C417.4 783.6 379.3 766.8 341.1 747.8C301.5 728.1 259.3 704.5 222.1 684.5C189.0 666.8 161.0 648.0 128.6 634.0C96.1 620.0 61.2 611.6 27.4 600.4C-6.4 589.2 -40.2 578.1 -74.0 567.0Z" fill="rgb(164,165,168)"/>
<path d="M-74.0 567.0C-40.2 578.1 -6.4 589.2 27.4 600.4C61.2 611.6 96.1 620.1 128.6 634.0C161.0 647.9 189.1 666.3 222.2 683.9C259.5 703.7 301.6 727.3 341.2 746.9C379.5 765.9 417.5 782.6 455.7 799.8C493.6 816.9 526.3 831.9 569.4 850.0C625.0 873.5 697.8 902.0 762.0 927.1C825.7 952.0 882.3 974.2 953.1 1000.0C1040.5 1031.9 1145.8 1067.1 1247.8 1102.4C1357.8 1140.4 1474.5 1180.6 1591.2 1220.5C1712.2 1261.8 1841.2 1302.4 1961.1 1346.1C2076.4 1388.1 2219.5 1447.3 2297.4 1477.2C2338.8 1493.1 2361.2 1503.2 2392.7 1513.2C2422.5 1522.7 2457.5 1532.0 2481.4 1536.2C2497.2 1539.0 2508.0 1540.0 2521.3 1540.1C2534.4 1540.2 2545.8 1539.6 2560.7 1537.0C2580.9 1533.5 2609.0 1523.6 2631.1 1517.8C2650.7 1512.6 2668.9 1509.4 2686.6 1503.5C2703.5 1497.9 2719.3 1490.4 2735.0 1483.8C2749.9 1477.6 2764.0 1471.3 2778.6 1465.1L2778.6 1465.1C2764.0 1471.5 2750.0 1477.8 2735.0 1484.2C2719.2 1491.1 2703.3 1499.1 2686.1 1505.1C2668.0 1511.3 2649.1 1514.8 2629.0 1520.5C2606.3 1527.0 2577.4 1538.2 2556.8 1542.3C2541.8 1545.3 2530.4 1546.2 2517.3 1546.3C2504.1 1546.4 2493.4 1545.7 2477.9 1543.0C2454.3 1538.8 2419.9 1528.9 2390.3 1519.4C2358.8 1509.2 2335.9 1499.1 2294.1 1483.3C2215.7 1453.7 2071.6 1396.7 1956.0 1355.0C1836.0 1311.8 1707.5 1270.5 1586.8 1229.1C1470.6 1189.2 1354.5 1149.1 1244.9 1110.8C1143.3 1075.2 1038.7 1039.3 951.6 1007.0C881.0 980.8 824.5 958.1 760.8 932.9C696.8 907.6 624.1 879.1 568.6 855.4C525.6 837.0 492.8 821.6 454.9 804.2C416.9 786.7 379.0 769.8 340.8 750.6C301.2 730.7 258.9 707.0 221.8 686.5C188.7 668.3 161.0 648.4 128.6 634.0C96.2 619.7 61.2 611.6 27.4 600.4C-6.4 589.2 -40.2 578.1 -74.0 567.0Z" fill="rgb(156,157,160)"/>
<path d="M-74.0 567.0C-40.2 578.1 -6.4 589.2 27.4 600.4C61.2 611.6 96.2 619.8 128.6 634.0C161.0 648.2 188.8 667.8 221.9 685.9C259.1 706.2 301.3 729.9 340.9 749.7C379.1 768.9 417.0 785.7 455.1 803.1C493.0 820.5 525.7 835.8 568.8 854.1C624.3 877.7 697.1 906.2 761.1 931.5C824.8 956.6 881.3 979.2 951.9 1005.3C1039.1 1037.5 1143.9 1073.3 1245.6 1108.8C1355.3 1147.0 1471.6 1187.1 1587.9 1227.0C1708.6 1268.4 1837.3 1309.5 1957.2 1352.9C2072.7 1394.6 2216.6 1452.1 2294.9 1481.8C2336.6 1497.6 2359.4 1507.8 2390.9 1517.9C2420.6 1527.4 2455.1 1537.2 2478.7 1541.3C2494.3 1544.1 2505.1 1544.9 2518.2 1544.8C2531.4 1544.7 2542.8 1543.9 2557.7 1541.0C2578.3 1537.0 2606.9 1526.2 2629.5 1519.9C2649.5 1514.2 2668.3 1510.9 2686.2 1504.7C2703.3 1498.8 2719.2 1490.9 2735.0 1484.1C2749.9 1477.7 2764.0 1471.5 2778.6 1465.1L2778.6 1465.2C2764.0 1471.7 2750.0 1477.9 2735.0 1484.5C2719.1 1491.6 2703.1 1500.0 2685.8 1506.2C2667.3 1512.8 2647.9 1516.5 2627.4 1522.6C2604.2 1529.6 2574.8 1541.7 2553.8 1546.3C2538.8 1549.6 2527.4 1550.7 2514.2 1551.0C2501.2 1551.3 2490.6 1550.8 2475.2 1548.1C2451.8 1544.0 2418.0 1533.6 2388.5 1524.1C2356.9 1513.8 2333.7 1503.6 2291.6 1487.9C2212.9 1458.6 2067.9 1403.1 1952.1 1361.8C1832.1 1319.0 1703.9 1277.1 1583.5 1235.6C1467.7 1195.6 1351.9 1155.7 1242.8 1117.2C1141.5 1081.4 1037.2 1044.9 950.4 1012.3C879.9 985.8 823.5 962.7 760.0 937.3C696.0 911.7 623.4 883.3 568.0 859.4C525.0 840.9 492.2 825.1 454.3 807.5C416.3 789.8 378.6 772.9 340.5 753.4C300.9 733.3 258.5 709.5 221.5 688.5C188.4 669.8 161.0 648.7 128.6 634.0C96.3 619.4 61.2 611.6 27.4 600.4C-6.4 589.2 -40.2 578.1 -74.0 567.0Z" fill="rgb(148,149,152)"/>
<path d="M-74.0 567.0C-40.2 578.1 -6.4 589.2 27.4 600.4C61.2 611.6 96.3 619.5 128.6 634.0C161.0 648.6 188.5 669.3 221.6 687.9C258.7 708.7 301.0 732.5 340.6 752.5C378.7 771.9 416.5 788.8 454.5 806.4C492.4 824.0 525.2 839.7 568.2 858.1C623.7 882.0 696.3 910.4 760.2 935.9C823.8 961.2 880.3 984.2 950.8 1010.6C1037.7 1043.1 1142.1 1079.4 1243.5 1115.1C1352.8 1153.6 1468.6 1193.5 1584.6 1233.5C1705.1 1275.0 1833.3 1316.7 1953.4 1359.7C2069.1 1401.1 2213.8 1457.0 2292.4 1486.4C2334.4 1502.1 2357.5 1512.3 2389.1 1522.6C2418.6 1532.1 2452.6 1542.3 2476.0 1546.4C2491.5 1549.1 2502.1 1549.7 2515.2 1549.5C2528.4 1549.3 2539.8 1548.2 2554.8 1545.0C2575.6 1540.6 2604.9 1528.8 2627.9 1522.0C2648.3 1515.9 2667.6 1512.4 2685.9 1505.9C2703.2 1499.7 2719.1 1491.4 2735.0 1484.4C2750.0 1477.9 2764.0 1471.6 2778.6 1465.2L2778.6 1465.3C2764.1 1471.8 2750.0 1478.1 2735.0 1484.8C2719.0 1492.1 2702.9 1500.9 2685.4 1507.4C2666.7 1514.3 2646.7 1518.1 2625.8 1524.7C2602.2 1532.2 2572.1 1545.3 2550.9 1550.3C2535.8 1553.9 2524.3 1555.2 2511.2 1555.7C2498.2 1556.2 2487.8 1555.8 2472.5 1553.2C2449.3 1549.2 2416.0 1538.4 2386.7 1528.8C2355.0 1518.4 2331.5 1508.1 2289.2 1492.6C2210.0 1463.5 2064.3 1409.6 1948.3 1368.6C1828.1 1326.1 1700.4 1283.7 1580.2 1242.1C1464.7 1202.1 1349.4 1162.3 1240.7 1123.5C1139.7 1087.6 1035.8 1050.6 949.3 1017.6C878.9 990.7 822.5 967.3 759.1 941.7C695.3 915.9 622.8 887.6 567.4 863.5C524.4 844.7 491.6 828.7 453.8 810.8C415.8 792.9 378.2 775.9 340.1 756.2C300.7 735.9 258.1 712.0 221.2 690.5C188.1 671.3 161.0 649.0 128.6 634.0C96.4 619.1 61.2 611.6 27.4 600.4C-6.4 589.2 -40.2 578.1 -74.0 567.0Z" fill="rgb(140,141,144)"/>
<path d="M-74.0 567.0C-40.2 578.1 -6.4 589.2 27.4 600.4C61.2 611.6 96.4 619.2 128.6 634.0C161.0 648.9 188.2 670.8 221.2 689.8C258.2 711.2 300.7 735.0 340.2 755.4C378.3 774.9 416.0 791.9 454.0 809.8C491.8 827.5 524.6 843.5 567.6 862.2C623.0 886.2 695.5 914.6 759.3 940.3C822.8 965.8 879.2 989.2 949.6 1015.9C1036.3 1048.8 1140.3 1085.6 1241.3 1121.5C1350.2 1160.2 1465.6 1200.0 1581.2 1240.0C1701.5 1281.6 1829.4 1323.8 1949.5 1366.4C2065.4 1407.6 2210.9 1461.9 2289.9 1491.1C2332.2 1506.7 2355.6 1516.9 2387.2 1527.2C2416.6 1536.8 2450.1 1547.5 2473.3 1551.5C2488.7 1554.2 2499.2 1554.6 2512.2 1554.2C2525.3 1553.8 2536.7 1552.5 2551.8 1549.0C2573.0 1544.1 2602.8 1531.4 2626.3 1524.1C2647.1 1517.6 2666.9 1513.9 2685.5 1507.0C2703.0 1500.6 2719.0 1491.9 2735.0 1484.8C2750.0 1478.0 2764.0 1471.8 2778.6 1465.2L2778.6 1465.3C2764.1 1471.9 2750.0 1478.2 2735.0 1485.2C2718.9 1492.6 2702.7 1501.8 2685.0 1508.6C2666.0 1515.8 2645.5 1519.8 2624.2 1526.9C2600.1 1534.8 2569.5 1548.8 2547.9 1554.3C2532.7 1558.1 2521.3 1559.8 2508.1 1560.4C2495.3 1561.0 2484.9 1560.9 2469.8 1558.3C2446.9 1554.4 2414.0 1543.1 2384.9 1533.4C2353.1 1523.0 2329.4 1512.7 2286.7 1497.2C2207.1 1468.4 2060.6 1416.1 1944.4 1375.4C1824.2 1333.3 1696.8 1290.3 1576.9 1248.6C1461.7 1208.5 1346.9 1168.9 1238.5 1129.9C1137.9 1093.7 1034.4 1056.2 948.1 1022.8C877.9 995.7 821.6 971.9 758.2 946.1C694.5 920.1 622.1 891.9 566.9 867.5C523.8 848.6 491.0 832.2 453.2 814.1C415.3 796.0 377.8 778.9 339.8 759.1C300.4 738.4 257.7 714.5 220.8 692.5C187.8 672.8 161.1 649.4 128.6 634.0C96.5 618.8 61.2 611.6 27.4 600.4C-6.4 589.2 -40.2 578.1 -74.0 567.0Z" fill="rgb(133,134,137)"/>
<path d="M-74.0 567.0C-40.2 578.1 -6.4 589.2 27.4 600.4C61.2 611.6 96.5 618.9 128.6 634.0C161.0 649.3 187.9 672.3 220.9 691.8C257.8 713.7 300.5 737.6 339.9 758.2C377.9 777.9 415.5 795.0 453.4 813.1C491.2 831.1 524.0 847.4 567.0 866.2C622.3 890.5 694.7 918.8 758.5 944.7C821.9 970.4 878.2 994.1 948.5 1021.2C1034.9 1054.4 1138.5 1091.7 1239.2 1127.9C1347.7 1166.8 1462.7 1206.4 1577.9 1246.5C1697.9 1288.2 1825.4 1331.0 1945.6 1373.2C2061.8 1414.1 2208.1 1466.8 2287.5 1495.7C2330.1 1511.2 2353.7 1521.5 2385.4 1531.9C2414.7 1541.6 2447.7 1552.7 2470.7 1556.7C2485.8 1559.3 2496.2 1559.5 2509.1 1558.9C2522.3 1558.3 2533.7 1556.8 2548.9 1553.0C2570.3 1547.7 2600.8 1534.0 2624.7 1526.2C2645.9 1519.3 2666.2 1515.4 2685.1 1508.2C2702.8 1501.5 2718.9 1492.4 2735.0 1485.1C2750.0 1478.2 2764.1 1471.9 2778.6 1465.3L2778.6 1465.4C2764.1 1472.1 2750.0 1478.4 2735.0 1485.5C2718.8 1493.1 2702.6 1502.7 2684.6 1509.7C2665.3 1517.3 2644.4 1521.5 2622.7 1529.0C2598.1 1537.4 2566.8 1552.3 2545.0 1558.3C2529.7 1562.4 2518.3 1564.3 2505.1 1565.1C2492.3 1565.9 2482.1 1566.0 2467.1 1563.4C2444.4 1559.5 2412.1 1547.8 2383.0 1538.1C2351.3 1527.5 2327.2 1517.2 2284.2 1501.8C2204.3 1473.2 2057.0 1422.6 1940.5 1382.2C1820.2 1340.4 1693.2 1296.9 1573.6 1255.1C1458.7 1215.0 1344.3 1175.5 1236.4 1136.3C1136.0 1099.9 1033.0 1061.8 946.9 1028.1C876.8 1000.7 820.6 976.5 757.3 950.4C693.7 924.3 621.5 896.1 566.3 871.6C523.2 852.5 490.4 835.7 452.6 817.4C414.8 799.1 377.4 781.9 339.5 761.9C300.1 741.0 257.3 716.9 220.5 694.5C187.5 674.3 161.1 649.7 128.6 634.0C96.6 618.5 61.2 611.6 27.4 600.4C-6.4 589.2 -40.2 578.1 -74.0 567.0Z" fill="rgb(126,127,130)"/>
<path d="M-74.0 567.0C-40.2 578.1 -6.4 589.2 27.4 600.4C61.2 611.6 96.6 618.6 128.6 634.0C161.1 649.6 187.6 673.8 220.6 693.8C257.4 716.1 300.2 740.2 339.6 761.0C377.5 780.9 415.0 798.1 452.8 816.4C490.6 834.6 523.4 851.2 566.5 870.3C621.7 894.7 694.0 923.0 757.6 949.0C820.9 975.0 877.2 999.1 947.3 1026.4C1033.5 1060.0 1136.6 1097.9 1237.1 1134.2C1345.1 1173.4 1459.7 1212.9 1574.6 1253.0C1694.4 1294.8 1821.5 1338.1 1941.8 1380.0C2058.1 1420.6 2205.2 1471.7 2285.0 1500.3C2327.9 1515.7 2351.9 1526.1 2383.6 1536.6C2412.7 1546.3 2445.2 1557.9 2468.0 1561.8C2483.0 1564.3 2493.3 1564.3 2506.1 1563.6C2519.2 1562.8 2530.7 1561.1 2545.9 1557.0C2567.7 1551.2 2598.8 1536.6 2623.2 1528.3C2644.7 1521.0 2665.5 1516.9 2684.8 1509.4C2702.6 1502.4 2718.8 1492.9 2735.0 1485.4C2750.0 1478.3 2764.1 1472.0 2778.6 1465.4L2778.6 1465.5C2764.1 1472.2 2750.0 1478.6 2735.0 1485.8C2718.7 1493.6 2702.4 1503.6 2684.3 1510.9C2664.6 1518.8 2643.2 1523.2 2621.1 1531.1C2596.1 1540.0 2564.2 1555.9 2542.0 1562.3C2526.7 1566.7 2515.2 1568.8 2502.1 1569.8C2489.4 1570.8 2479.2 1571.0 2464.4 1568.5C2441.9 1564.7 2410.1 1552.5 2381.2 1542.8C2349.4 1532.1 2325.0 1521.7 2281.7 1506.5C2201.4 1478.1 2053.3 1429.1 1936.6 1389.0C1816.3 1347.6 1689.7 1303.5 1570.3 1261.6C1455.8 1221.4 1341.8 1182.0 1234.3 1142.7C1134.2 1106.0 1031.6 1067.5 945.8 1033.4C875.8 1005.6 819.6 981.1 756.4 954.8C692.9 928.5 620.8 900.4 565.7 875.6C522.6 856.3 489.8 839.3 452.0 820.7C414.3 802.3 377.0 784.9 339.2 764.7C299.8 743.6 256.9 719.4 220.2 696.4C187.2 675.8 161.1 650.1 128.6 634.0C96.7 618.2 61.2 611.6 27.4 600.4C-6.4 589.2 -40.2 578.1 -74.0 567.0Z" fill="rgb(119,120,123)"/>
<path d="M-74.0 567.0C-40.2 578.1 -6.4 589.2 27.4 600.4C61.2 611.6 96.7 618.3 128.6 634.0C161.1 650.0 187.3 675.3 220.3 695.8C257.0 718.6 299.9 742.8 339.3 763.8C377.1 783.9 414.4 801.3 452.2 819.7C490.0 838.1 522.8 855.1 565.9 874.4C621.0 899.0 693.2 927.1 756.7 953.4C819.9 979.6 876.1 1004.1 946.2 1031.7C1032.1 1065.7 1134.8 1104.1 1234.9 1140.6C1342.6 1179.9 1456.7 1219.4 1571.3 1259.5C1690.8 1301.4 1817.5 1345.3 1937.9 1386.8C2054.5 1427.1 2202.3 1476.6 2282.5 1505.0C2325.7 1520.3 2350.0 1530.6 2381.8 1541.3C2410.7 1551.0 2442.7 1563.1 2465.3 1566.9C2480.1 1569.4 2490.3 1569.2 2503.0 1568.3C2516.2 1567.4 2527.7 1565.3 2543.0 1561.0C2565.0 1554.8 2596.7 1539.2 2621.6 1530.4C2643.6 1522.7 2664.8 1518.4 2684.4 1510.5C2702.4 1503.3 2718.7 1493.5 2735.0 1485.7C2750.0 1478.5 2764.1 1472.2 2778.6 1465.4L2778.6 1465.5C2764.1 1472.4 2750.1 1478.7 2735.0 1486.1C2718.6 1494.1 2702.2 1504.5 2683.9 1512.1C2663.9 1520.3 2642.0 1524.9 2619.5 1533.2C2594.0 1542.6 2561.5 1559.4 2539.1 1566.3C2523.7 1571.0 2512.2 1573.3 2499.0 1574.5C2486.4 1575.6 2476.4 1576.1 2461.7 1573.6C2439.4 1569.9 2408.1 1557.3 2379.4 1547.5C2347.5 1536.7 2322.8 1526.2 2279.2 1511.1C2198.6 1483.0 2049.7 1435.6 1932.8 1395.8C1812.3 1354.7 1686.1 1310.1 1566.9 1268.1C1452.8 1227.9 1339.2 1188.6 1232.1 1149.0C1132.4 1112.2 1030.2 1073.1 944.6 1038.7C874.8 1010.6 818.7 985.7 755.5 959.2C692.2 932.7 620.1 904.6 565.1 879.7C522.0 860.2 489.2 842.8 451.4 824.1C413.8 805.4 376.6 787.9 338.9 767.5C299.5 746.2 256.5 721.9 219.9 698.4C186.9 677.3 161.1 650.4 128.6 634.0C96.8 618.0 61.2 611.6 27.4 600.4C-6.4 589.2 -40.2 578.1 -74.0 567.0Z" fill="rgb(111,112,115)"/>
<linearGradient id="rfade" gradientUnits="userSpaceOnUse" x1="1700" y1="0" x2="2600" y2="0"><stop offset="0" stop-color="#8f9093" stop-opacity="0"/><stop offset="1" stop-color="#8f9093" stop-opacity=".8"/></linearGradient>
<path d="M-74.0 567.0C-40.2 578.1 -6.4 589.2 27.4 600.4C61.2 611.6 95.3 622.9 128.6 634.0C161.1 644.8 191.6 652.7 225.0 666.0C263.0 681.1 304.3 704.1 344.0 721.6C383.0 738.8 422.2 754.5 461.0 770.0C499.0 785.2 531.6 797.2 574.6 813.6C630.9 835.1 704.8 864.4 770.0 887.7C834.4 910.7 891.6 929.5 963.5 952.5C1053.2 981.2 1162.1 1011.7 1267.0 1045.0C1380.7 1081.1 1501.3 1122.6 1621.0 1162.0C1744.2 1202.6 1876.9 1238.0 1996.0 1285.0C2109.3 1329.7 2245.2 1403.3 2319.8 1435.5C2358.5 1452.2 2378.2 1461.9 2409.0 1471.0C2440.2 1480.2 2479.8 1485.4 2505.6 1490.2C2522.8 1493.4 2534.6 1496.0 2548.6 1497.8C2561.8 1499.5 2573.1 1500.7 2587.3 1501.0C2604.7 1501.4 2627.3 1500.3 2645.3 1498.8C2661.2 1497.5 2675.2 1495.9 2690.0 1493.0C2705.1 1490.0 2720.2 1485.8 2735.0 1481.0C2749.7 1476.3 2764.0 1470.0 2778.5 1464.5L2778.6 1465.5C2764.1 1472.4 2750.1 1478.8 2735.0 1486.2C2718.6 1494.2 2702.2 1504.6 2683.8 1512.3C2663.8 1520.6 2641.8 1525.1 2619.2 1533.5C2593.7 1543.0 2561.1 1560.0 2538.6 1566.9C2523.2 1571.7 2511.7 1574.0 2498.5 1575.3C2486.0 1576.4 2475.9 1576.9 2461.3 1574.5C2439.0 1570.7 2407.8 1558.0 2379.1 1548.2C2347.3 1537.4 2322.4 1527.0 2278.8 1511.8C2198.1 1483.8 2049.1 1436.7 1932.1 1396.9C1811.7 1355.9 1685.6 1311.1 1566.4 1269.1C1452.3 1228.9 1338.8 1189.7 1231.8 1150.1C1132.1 1113.2 1030.0 1074.0 944.4 1039.5C874.6 1011.4 818.5 986.4 755.4 959.9C692.0 933.3 620.0 905.3 565.0 880.3C521.9 860.8 489.1 843.3 451.3 824.6C413.7 805.9 376.6 788.4 338.9 768.0C299.4 746.6 256.4 722.3 219.8 698.8C186.9 677.5 161.1 650.5 128.6 634.0C96.9 617.9 61.2 611.6 27.4 600.4C-6.4 589.2 -40.2 578.1 -74.0 567.0Z" fill="url(#rfade)"/>
<path fill="none" stroke="#343537" stroke-width="1.85" d="M-74.0 567.0C-40.2 578.1 -6.4 589.2 27.4 600.4C61.2 611.6 95.3 622.9 128.6 634.0C161.1 644.8 191.6 652.7 225.0 666.0C263.0 681.1 304.3 704.1 344.0 721.6C383.0 738.8 422.2 754.5 461.0 770.0C499.0 785.2 531.6 797.2 574.6 813.6C630.9 835.1 704.8 864.4 770.0 887.7C834.4 910.7 891.6 929.5 963.5 952.5M-74.0 567.0C-40.2 578.1 -6.4 589.2 27.4 600.4C61.2 611.6 95.5 622.0 128.6 634.0C161.1 645.7 190.9 656.8 224.2 671.4C262.0 688.0 303.5 711.1 343.1 729.2C381.9 747.0 420.8 763.0 459.4 779.0C497.4 794.8 530.0 807.7 573.0 824.6C629.1 846.7 702.7 875.8 767.6 899.6C831.8 923.2 888.8 943.0 960.4 966.9M-74.0 567.0C-40.2 578.1 -6.4 589.2 27.4 600.4C61.2 611.6 95.9 620.7 128.6 634.0C161.0 647.2 189.7 663.4 222.8 680.0C260.3 698.8 302.2 722.3 341.8 741.4C380.2 760.0 418.6 776.5 456.9 793.3C494.8 810.0 527.5 824.4 570.5 842.1C626.3 865.1 699.3 893.9 763.8 918.5C827.6 943.0 884.3 964.5 955.4 989.7M-74.0 567.0C-40.2 578.1 -6.4 589.2 27.4 600.4C61.2 611.6 96.4 619.0 128.6 634.0C161.0 649.1 188.1 671.5 221.1 690.8C258.0 712.4 300.6 736.3 340.1 756.7C378.1 776.4 415.7 793.4 453.7 811.3C491.5 829.2 524.3 845.4 567.3 864.1C622.7 888.3 695.1 916.6 758.9 942.4C822.4 968.0 878.7 991.5 949.1 1018.4"/>
<path fill="none" stroke="#343537" stroke-width="1.70" d="M963.5 952.5C1053.2 981.2 1162.1 1011.7 1267.0 1045.0C1380.7 1081.1 1501.3 1122.6 1621.0 1162.0M960.4 966.9C1049.3 996.5 1157.3 1028.1 1261.2 1062.3C1373.6 1099.4 1492.6 1141.3 1610.9 1181.8M955.4 989.7C1043.3 1020.8 1149.5 1054.7 1252.0 1089.9C1362.6 1127.8 1479.9 1169.0 1596.6 1209.8M949.1 1018.4C1035.6 1051.5 1139.5 1088.2 1240.3 1124.6C1348.8 1163.7 1463.6 1204.3 1578.6 1245.2"/>
<path fill="none" stroke="#343537" stroke-width="1.50" d="M1621.0 1162.0C1744.2 1202.6 1876.9 1238.0 1996.0 1285.0C2109.3 1329.7 2245.2 1403.3 2319.8 1435.5M1610.9 1181.8C1732.9 1223.5 1863.4 1262.3 1982.4 1308.9C2096.0 1353.4 2233.9 1422.8 2309.9 1454.0M1596.6 1209.8C1717.4 1252.1 1845.8 1294.0 1965.0 1339.3C2079.4 1382.8 2220.4 1446.2 2298.3 1475.5M1578.6 1245.2C1698.2 1287.7 1824.7 1332.2 1944.5 1375.1C2060.4 1416.6 2205.7 1471.6 2286.0 1498.5"/>
<path fill="none" stroke="#343537" stroke-width="1.30" d="M2319.8 1435.5C2358.5 1452.2 2378.2 1461.9 2409.0 1471.0C2440.2 1480.2 2479.8 1485.4 2505.6 1490.2C2522.8 1493.4 2534.6 1496.0 2548.6 1497.8C2561.8 1499.5 2573.1 1500.7 2587.3 1501.0C2604.7 1501.4 2627.3 1500.3 2645.3 1498.8C2661.2 1497.5 2675.2 1495.9 2690.0 1493.0C2705.1 1490.0 2720.2 1485.8 2735.0 1481.0C2749.7 1476.3 2764.0 1470.0 2778.5 1464.5M2309.9 1454.0C2349.7 1470.4 2370.8 1479.9 2402.0 1489.0C2432.9 1497.9 2471.0 1503.8 2496.1 1508.2C2512.8 1511.1 2524.2 1513.2 2537.9 1514.3C2551.1 1515.4 2562.4 1516.0 2576.9 1515.1C2595.4 1514.0 2620.1 1509.4 2639.7 1506.2C2657.1 1503.4 2672.7 1501.2 2688.7 1497.1C2704.5 1493.1 2719.9 1487.6 2735.0 1482.1C2749.8 1476.7 2764.0 1470.5 2778.5 1464.7M2298.3 1475.5C2339.7 1491.1 2362.5 1500.0 2394.5 1508.5C2425.3 1516.7 2461.9 1522.9 2486.7 1526.2C2503.2 1528.4 2514.5 1529.1 2528.2 1529.4C2541.4 1529.6 2552.7 1529.8 2567.4 1527.9C2586.9 1525.4 2613.6 1517.7 2634.7 1513.0C2653.3 1508.7 2670.5 1505.9 2687.5 1500.9C2703.9 1495.9 2719.6 1489.2 2735.0 1483.1C2749.9 1477.2 2764.0 1471.0 2778.5 1464.9M2286.0 1498.5C2329.2 1512.9 2353.6 1521.5 2386.4 1529.5C2417.0 1537.0 2451.9 1544.0 2476.4 1545.8C2493.0 1547.0 2504.7 1545.3 2518.5 1544.4C2531.9 1543.6 2543.0 1543.6 2558.0 1540.7C2578.5 1536.7 2607.1 1526.0 2629.6 1519.7C2649.6 1514.1 2668.3 1510.7 2686.3 1504.6C2703.3 1498.8 2719.2 1490.8 2735.0 1484.1C2749.9 1477.7 2764.0 1471.4 2778.6 1465.1"/>
<path fill="none" stroke="#2e2f31" stroke-width="4.5" stroke-opacity=".85" d="M61.7 590L128.6 635L145.8 647.5L185 674"/>
<path fill="none" stroke="#505154" stroke-width="4" stroke-opacity=".6" d="M145.8 647.5C170.5 664.3 192.0 680.3 220.0 697.8C254.7 719.5 299.6 745.3 339.0 766.6C376.7 786.9 413.9 804.4 451.6 823.0C489.4 841.7 522.2 858.9 565.3 878.4C620.3 903.3 692.4 931.3 755.8 957.8C819.0 984.2 875.1 1009.0 945.0 1037.0C1030.7 1071.3 1133.0 1110.2 1232.8 1147.0C1340.0 1186.5 1453.8 1225.8 1568.0 1266.0C1687.3 1308.0 1821.6 1355.0 1934.0 1393.6C2029.6 1426.5 2137.1 1462.8 2200.0 1483.6C2234.4 1495.0 2253.0 1500.1 2280.0 1509.6C2308.3 1519.5 2339.3 1532.4 2366.0 1541.8C2388.9 1549.9 2412.6 1557.9 2430.4 1563.3C2442.9 1567.1 2451.8 1570.4 2462.6 1572.0C2473.3 1573.6 2484.2 1573.5 2494.9 1573.0C2505.6 1572.5 2515.1 1571.7 2527.0 1568.7C2542.8 1564.7 2562.1 1555.6 2580.8 1548.3C2601.4 1540.3 2623.8 1531.1 2645.3 1522.5"/>
<path fill="none" stroke="#2a2b2d" stroke-width="6" stroke-opacity=".8" d="M2778.6 1466.4L2752.7 1478.4L2709.7 1496.7L2670 1513"/>
<path fill="none" stroke="#2c2d2f" stroke-width="1.9" d="M437.0 443.0 Q277.8 532.5 128.6 634.0Q128.6 634.0 128.6 634.0M579.7 447.8 Q397.4 550.9 225.0 666.0Q213.0 675.5 220.0 697.8M867.5 467.6 Q600.8 588.6 344.0 721.6Q329.1 735.1 339.0 766.6M1013.0 492.0 Q732.0 625.0 461.0 770.0Q439.9 785.9 451.6 823.0M1145.0 517.4 Q854.8 659.5 574.6 813.6Q551.0 833.0 565.3 878.4M1351.0 564.8 Q1055.5 720.2 770.0 887.7Q740.4 908.7 755.8 957.8M1531.0 616.4 Q1242.2 778.5 963.5 952.5Q926.4 977.9 945.0 1037.0M1795.5 703.7 Q1526.2 868.4 1267.0 1045.0Q1210.4 1075.6 1232.8 1147.0M2086.0 821.7 Q1848.5 985.9 1621.0 1162.0Q1545.1 1193.2 1568.0 1266.0M2390.0 966.0 Q2188.0 1119.5 1996.0 1285.0Q1910.1 1317.6 1934.0 1393.6M2658.0 1123.5 Q2483.9 1273.5 2319.8 1435.5Q2263.7 1457.7 2280.0 1509.6M2801.0 1381.0 Q2740.5 1431.0 2690.0 1493.0Q2679.9 1498.6 2684.0 1511.7M103.7 589L264 498.8L352 444M78 585L215 507L268 476M516 447.5L400 512L300 575L128 680M695.5 447.8L692 466"/>
</g>
<g fill="none" stroke="#222" stroke-width="2.2">
<ellipse cx="272.8" cy="503.3" rx="17.5" ry="8" transform="rotate(-8 272.8 503.3)"/>
<ellipse cx="321.7" cy="514.0" rx="17.5" ry="8" transform="rotate(-8 321.7 514.0)"/>
<path d="M288.8 506.3 L305.7 511.0"/>
<ellipse cx="552.0" cy="480.3" rx="17.5" ry="8" transform="rotate(-8 552.0 480.3)"/>
<ellipse cx="602.0" cy="489.3" rx="17.5" ry="8" transform="rotate(-8 602.0 489.3)"/>
<path d="M568.0 483.3 L586.0 486.3"/>
<ellipse cx="272.8" cy="609.0" rx="17.5" ry="8" transform="rotate(-8 272.8 609.0)"/>
<ellipse cx="321.7" cy="619.7" rx="17.5" ry="8" transform="rotate(-8 321.7 619.7)"/>
<path d="M288.8 612.0 L305.7 616.7"/>
<ellipse cx="335.8" cy="681.4" rx="17.5" ry="8" transform="rotate(-8 335.8 681.4)"/>
<ellipse cx="388.7" cy="695.0" rx="17.5" ry="8" transform="rotate(-8 388.7 695.0)"/>
<path d="M351.8 684.4 L372.7 692.0"/>
<ellipse cx="765.7" cy="476.0" rx="17.5" ry="8" transform="rotate(-8 765.7 476.0)"/>
<ellipse cx="817.8" cy="487.5" rx="17.5" ry="8" transform="rotate(-8 817.8 487.5)"/>
<path d="M781.7 479.0 L801.8 484.5"/>
</g></svg><svg width="2880" height="1800" viewBox="0 0 2880 1800">
<defs>
<radialGradient id="bsph" cx="0.42" cy="0.22" r="0.85" fx="0.42" fy="0.16">
 <stop offset="0" stop-color="#b8f2ff"/><stop offset="0.18" stop-color="#46c6ff"/><stop offset="0.5" stop-color="#1e8fff"/><stop offset="0.85" stop-color="#1a52ff"/><stop offset="1" stop-color="#2038f0"/>
</radialGradient>
<linearGradient id="lens" x1="0" y1="0" x2="1" y2="0">
 <stop offset="0" stop-color="#aee3fb"/><stop offset="0.45" stop-color="#4fa9e3"/><stop offset="1" stop-color="#2b7fc4"/>
</linearGradient>
<linearGradient id="lensv" x1="0" y1="0" x2="0" y2="1">
 <stop offset="0" stop-color="#9fdcf8"/><stop offset="0.5" stop-color="#3f9ddb"/><stop offset="1" stop-color="#2f86c9"/>
</linearGradient>
<linearGradient id="lensd" x1="0" y1="0" x2="1" y2="1">
 <stop offset="0" stop-color="#3f9be0"/><stop offset="0.6" stop-color="#7cc8f5"/><stop offset="1" stop-color="#3b95d8"/>
</linearGradient>
<linearGradient id="tri" x1="0" y1="0" x2="0" y2="1">
 <stop offset="0" stop-color="#1f6fae"/><stop offset="0.6" stop-color="#0d4f8c"/><stop offset="1" stop-color="#0a4378"/>
</linearGradient>
<linearGradient id="fire" x1="0" y1="0" x2="0" y2="1">
 <stop offset="0" stop-color="#e04a10"/><stop offset="0.45" stop-color="#ffb040"/><stop offset="1" stop-color="#ffffff"/>
</linearGradient>
<linearGradient id="stripes" x1="0" y1="0" x2="0" y2="1">
 <stop offset="0" stop-color="#fff"/><stop offset="1" stop-color="#fff"/>
</linearGradient>
<radialGradient id="shade" cx="0.5" cy="0.45" r="0.55">
 <stop offset="0" stop-color="#fff" stop-opacity=".55"/><stop offset="0.55" stop-color="#fff" stop-opacity="0"/><stop offset="1" stop-color="#000" stop-opacity=".35"/>
</radialGradient>
<linearGradient id="rainbow" x1="0" y1="0" x2="0" y2="1">
 <stop offset="0" stop-color="#ff5a8a"/><stop offset="0.14" stop-color="#ff4f6e"/><stop offset="0.26" stop-color="#5a7bff"/><stop offset="0.38" stop-color="#38d8e8"/><stop offset="0.5" stop-color="#b8f038"/><stop offset="0.6" stop-color="#e8f030"/><stop offset="0.7" stop-color="#58e070"/><stop offset="0.8" stop-color="#40b8f0"/><stop offset="0.9" stop-color="#d050c0"/><stop offset="1" stop-color="#ff4a5a"/>
</linearGradient>
<pattern id="dots" width="3" height="3" patternUnits="userSpaceOnUse"><rect width="3" height="3" fill="#fff"/><rect width="1.6" height="1.6" fill="#1a1a70"/></pattern>
<clipPath id="cQ"><circle cx="1643.5" cy="189" r="20"/></clipPath>
<filter id="soft" x="-20%" y="-10%" width="140%" height="120%"><feGaussianBlur stdDeviation="0.6"/></filter>
</defs>

<!-- ===== main toolbar icons ===== -->
<!-- 1: board + hand -->
<ellipse cx="32.5" cy="73" rx="12.5" ry="26.5" fill="#fbfbfd" stroke="#8a8f96" stroke-width="1.6"/>
<path d="M24 62q4-6 8-1q4-6 8 1q3 8-2 12h-12q-5-5-2-12z" fill="#f6b8c0" opacity=".7"/>
<path d="M30 66v14l-4-3-2 2 7 12h12l2-10v-7l-3-1v3l-1-4-3-1v3l-1-4-3-1v4l-1-8z" fill="#fff" stroke="#4a4f58" stroke-width="1.4" stroke-linejoin="round"/>
<!-- 2: folder -->
<path d="M77 60.500l15-6.500 18 5.500 2 4.500-4 21-5 6.500z" fill="#efebc4" stroke="#8b8b84" stroke-width="1.400" stroke-linejoin="round"/>
<path d="M92 54l2 4 14 4" fill="none" stroke="#8b8b84" stroke-width="1.200"/>
<path d="M108 85l4 1-1 4-8 1.500z" fill="#8f8f95"/>
<path d="M79 64.500l23 8.500 1 18.500-21.500-10z" fill="#f5f196" stroke="#8e8a5e" stroke-width="1.200" stroke-linejoin="round"/>
<!-- 3: save -->
<path d="M145 55l5-1 20 10 1 27 2 2-3 1-25-13z" fill="#55585d"/>
<path d="M147 58l20 9v24l-20-10z" fill="#7b7e84"/>
<path d="M148 66l18 8v16l-18-8z" fill="url(#fire)"/>
<path d="M168 65l2 27 3 2-3 1-3-3z" fill="#3b3d42"/>
<!-- 4: ruler -->
<rect x="232" y="79" width="35" height="15" fill="#9aa0a8" opacity=".6"/>
<rect x="230" y="76.5" width="34.5" height="14.8" fill="#f3c915"/>
<path d="M230 76.5h34.5" stroke="#222" stroke-width="1.6" stroke-dasharray="1.5 1.5"/>
<path d="M238.5 77v4M256 77v4" stroke="#222" stroke-width="1.6"/>
<path d="M236 84h2.5v4.5M253 84h4v4.5h-4z" fill="none" stroke="#9a7b12" stroke-width="1.4"/>
<path d="M230 61h36" stroke="#777" stroke-width="1.2"/>
<path d="M256.6 53.6v19" stroke="#111" stroke-width="1.6"/>
<path d="M230 72.8h36M265 56v17" stroke="#555" stroke-width="1.3" stroke-dasharray="1.3 1.7"/>

<!-- Design icon -->
<path d="M346.5 56.5L355.5 73L363 88.5" stroke="#111" stroke-width="2" fill="none"/>
<circle cx="346.5" cy="56.5" r="3.2" fill="#1f55ff" stroke="#0c1c70" stroke-width="1"/>
<circle cx="355.5" cy="73" r="6.2" fill="#ff1f12" stroke="#300" stroke-width="1.2"/>
<circle cx="363" cy="88.7" r="3.8" fill="#12e048" stroke="#063" stroke-width="1"/>
<!-- 3D view sphere -->
<circle cx="516.4" cy="73" r="16.6" fill="url(#bsph)"/>
<!-- Plan icon -->
<path d="M664.5 55.5h24l9 9v27h-33z" fill="#fff" stroke="#22226a" stroke-width="1.6"/>
<path d="M688.5 55.5v9h9" fill="#cfe0ff" stroke="#22226a" stroke-width="1.4"/>
<path d="M667 63h12q10 1 15 8M667 78h12q10-1 15-8M667 70.5h27" fill="none" stroke="#333" stroke-width="1.2" stroke-dasharray="1.6 1.6"/>
<path d="M676 86h3M682 86h3" stroke="#333" stroke-width="1.6"/>
<!-- CNC icon -->
<rect x="836.5" y="53.5" width="10" height="11" fill="#fff" stroke="#1a1a70" stroke-width="1.8"/>
<path d="M827 64.5h29v12a14.5 14 0 0 1-29 0z" fill="url(#dots)" stroke="#1a1a70" stroke-width="1.8"/>

<!-- ===== title bar ===== -->
<circle cx="32" cy="133" r="14.3" fill="url(#bsph)"/>
<circle cx="32" cy="133" r="14.3" fill="none" stroke="#2a4cff" stroke-width="1" stroke-dasharray="2 2" opacity=".6"/>
<!-- window buttons -->
<g>
<rect x="2764" y="120" width="30" height="27" fill="#f4f5fa"/><path d="M2764 147.5h30.5v-27.5" fill="none" stroke="#7a7a7a" stroke-width="2"/><path d="M2764.5 147v-26.5h29.5" fill="none" stroke="#fff" stroke-width="1.5"/>
<rect x="2796.5" y="120" width="31" height="27" fill="#f4f5fa"/><path d="M2796.5 147.5h31.5v-27.5" fill="none" stroke="#7a7a7a" stroke-width="2"/><path d="M2797 147v-26.5h30.5" fill="none" stroke="#fff" stroke-width="1.5"/>
<rect x="2832" y="120" width="32" height="27" fill="#f4f5fa"/><path d="M2832 147.5h32.5v-27.5" fill="none" stroke="#7a7a7a" stroke-width="2"/><path d="M2832.5 147v-26.5h31.5" fill="none" stroke="#fff" stroke-width="1.5"/>
<path d="M2771 141.5h11" stroke="#111" stroke-width="2.6"/>
<path d="M2803 128.5h16.5" stroke="#111" stroke-width="2.6"/><path d="M2803.5 128v14h15.5v-14" fill="none" stroke="#888" stroke-width="1.5"/>
<path d="M2840 126l15 15M2855 126l-15 15" stroke="#111" stroke-width="2.4"/>
</g>

<!-- ===== 3D toolbar icons ===== -->
<!-- magnifier -->
<circle cx="39" cy="183" r="9.8" fill="#fbfcff" stroke="#5f7077" stroke-width="3.6"/>
<path d="M46.5 191l10.5 13.5" stroke="#5f7077" stroke-width="5.6"/>
<!-- zoom box -->
<rect x="81" y="167.5" width="24" height="17.5" fill="none" stroke="#6d7a80" stroke-width="2"/>
<circle cx="105" cy="187.5" r="9.8" fill="#fbfcff" fill-opacity=".7" stroke="#5f7077" stroke-width="3.6"/>
<path d="M112.5 195.5l10.5 13.5" stroke="#5f7077" stroke-width="5.6"/>
<!-- hand -->
<path d="M160.500 203.300L166.400 196L169.800 184.800Q171.500 179 174.400 176.800L183 172.200L192.900 170.500Q199 171 200.800 174.200L202.100 177.500L192.900 186L189.600 194L203.500 197.300L202.800 199.300L174.400 211.200" fill="none" stroke="#7b7f83" stroke-width="2" stroke-linejoin="round"/>
<path d="M175.700 181.400L181 174.800M181.600 182L188.300 174.200M187.600 182.800L194.900 174.200" stroke="#2a2a2a" stroke-width="2.300"/>
<!-- rotate view -->
<path d="M223.500 191Q222 184.500 232 183.500L258 184.500Q268.500 186.500 268.500 194.500L266 200" fill="none" stroke="#47423c" stroke-width="3.200"/>
<path d="M244 166.500Q237 172 237 181" fill="none" stroke="#47423c" stroke-width="3.600"/>
<path d="M225 189.500L236 186L253 201L248 203L252 208L238 207L232.500 205.500L237 200Z" fill="#3b8fe8"/>
<path d="M249 166L264.500 181L259 181.500Q262 196 252 212.500L247.500 209Q256 196 253.500 183L246.500 184Z" fill="#3b8fe8"/>
<path d="M243 206.500L251 213" stroke="#3d3a36" stroke-width="4"/>
<path d="M224 187l3 6" stroke="#14205a" stroke-width="3"/>
<!-- yellow light + sphere -->
<path d="M302.5 168.5l41.5 13.5-1.5 14-18 13.5h-12.5l-2-12z" fill="#ffee18"/>
<path d="M302.5 168.5l3 10 2-3 3 5 1-7 4-1z" fill="#4a4a20" stroke="#2a2a10" stroke-width=".8"/>
<circle cx="329" cy="195.5" r="12.6" fill="url(#bsph)"/>
<!-- board shapes -->
<path d="M374 188q3-11 28-11.5q16 0 25.5 10.5q-9 12-26 12.5q-22 0-27.500-11.500z" fill="url(#lensv)"/>
<ellipse cx="462.500" cy="189.500" rx="26.500" ry="11.800" fill="#3f9bd9"/><ellipse cx="464" cy="191" rx="16" ry="7" fill="#58aee6" opacity=".7"/>
<path d="M497.500 186q26 9 54-4.500q-6 13-28 13q-16 0-26-8.500z" fill="url(#lensv)"/>
<path d="M562 199.500v-5q16-4 25-17q9 13 25 17v5z" fill="url(#tri)"/>
<path d="M624 199.500v-3.500l25.300-19.600l24.400 19.600v3.500z" fill="url(#tri)"/>
<path d="M685 179.500q20-2 51.500 14q-24 9-46.500-7.500z" fill="url(#lensd)" stroke="#6f7f8a" stroke-width=".6"/>
<path d="M747 193.500q20-12 52.500-15q-8 18-44 19.500z" fill="url(#lensd)" stroke="#6f7f8a" stroke-width=".6"/>
<path d="M808.500 202l43.500-27q12 8 9.500 20q-20 9-53 7z" fill="url(#lensd)"/><path d="M808.500 202l43.500-27" stroke="#234" stroke-width="1"/>
<path d="M872 183q4-10 18-8q18 4 33 24q-2 4-8 3q-40 2-43-19z" fill="#3f9bd9"/>
<path d="M958.0 161.500C951.0 172 945.7 180 945.7 192C945.7 204 949.0 212 953.5 216.500L962.5 216.500C967.0 212 970.3 204 970.3 192C970.3 180 965.0 172 958.0 161.500Z" fill="url(#lens)" filter="url(#soft)"/>
<!-- rotate triangle button -->
<circle cx="1037.100" cy="189.300" r="20.300" fill="none" stroke="#3d96d6" stroke-width="3.800"/>
<path d="M1052 181.500h12.500l-6 8z" fill="#3d96d6"/><path d="M1058.500 176v6" stroke="#fff" stroke-width="0"/>
<rect x="1010" y="191" width="56" height="9" fill="#fff"/>
<path d="M1012 199.600l25.100-22.800l25.100 22.800z" fill="#0e4f8c"/>
<!-- spin icons -->
<g id="spin1">
<path d="M1098.5 161.500C1091.5 172 1086.2 180 1086.2 192C1086.2 204 1089.5 212 1094.0 216.500L1103.0 216.500C1107.5 212 1110.8 204 1110.8 192C1110.8 180 1105.5 172 1098.5 161.500Z" fill="url(#lens)" filter="url(#soft)"/>
<path d="M1088 181.500q-14.500 2.500-14.500 7q0 8.400 26 8.400q26 0 26-8.400q0-4.500-10-6.500" fill="none" stroke="#ff2418" stroke-width="3.800"/>
<path d="M1110 182.500l8.500-5.500 1.500 10z" fill="#ff2418"/>
</g>
<g>
<path d="M1161.5 161.500C1154.5 172 1149.2 180 1149.2 192C1149.2 204 1152.5 212 1157.0 216.500L1166.0 216.500C1170.5 212 1173.8 204 1173.8 192C1173.8 180 1168.5 172 1161.5 161.500Z" fill="url(#lens)" filter="url(#soft)"/>
<path d="M1151 181.500q-14.500 2.500-14.500 7q0 8.400 26 8.400q26 0 26-8.400q0-4.500-10-6.500" fill="none" stroke="#ff2418" stroke-width="3.800"/>
<path d="M1173 182.500l8.500-5.500 1.500 10z" fill="#ff2418"/>
<path d="M1145.400 189.600l11.200 11.200h-5.200v15h-11.700v-15h-5.500z" fill="#f6a51c" stroke="#7a4a00" stroke-width="1.2"/>
</g>
<!-- wire spheres -->
<g fill="none" stroke="#111" stroke-width="2">
<circle cx="1238.500" cy="187.500" r="17.500"/><ellipse cx="1238.500" cy="178.500" rx="9.300" ry="6"/>
<path d="M1222 186q4 10 16.500 10q12.500 0 16.500-10"/><path d="M1222.500 195q6 9 16 9q10 0 16-9" stroke-width="1.6" opacity="0"/>
</g>
<g fill="none" stroke-width="2">
<circle cx="1300.500" cy="187.500" r="17.500" stroke="#111"/><ellipse cx="1300.500" cy="178.500" rx="9.300" ry="6" stroke="#f0202a" stroke-width="1.6"/>
<path d="M1284 186q4 10 16.500 10q12.500 0 16.500-10" stroke="#f0202a" stroke-width="1.6"/>
</g>
<g fill="none" stroke="#111" stroke-width="1.8">
<circle cx="1362" cy="187.500" r="17.500" stroke-width="2.600"/>
<path d="M1362 170l-15 9 0 17 15 9 15-9 0-17z"/><path d="M1347 179l30 0-15 26zM1347 196l30 0-15-26z"/><circle cx="1362" cy="187.500" r="8"/>
</g>
<!-- blue spheres -->
<circle cx="1441" cy="189.300" r="19.300" fill="url(#bsph)"/>
<circle cx="1503" cy="189.300" r="19.300" fill="url(#bsph)"/>
<!-- sphere + pencil -->
<circle cx="1565" cy="190" r="19" fill="url(#bsph)"/>
<path d="M1558 206q8-8 20-6l8 2 5 4-2 3h-30z" fill="#18b8e8"/>
<path d="M1562 196l24-25 5 5-24 24z" fill="#dfe9ff" stroke="#111" stroke-width="2.200"/>
<path d="M1562 196l-4 9 9-4z" fill="#f3c48a" stroke="#111" stroke-width="1.200"/>
<!-- striped sphere -->
<g clip-path="url(#cQ)">
<rect x="1620" y="166" width="48" height="48" fill="#f2f2f2"/>
<path d="M1620 172h48M1620 179.500h48M1620 187h48M1620 194.500h48M1620 202h48M1620 209h48" stroke="#3a3a3a" stroke-width="4"/>
<circle cx="1643.500" cy="189" r="20" fill="url(#shade)"/>
</g>
<!-- rainbow sphere -->
<circle cx="1705" cy="189" r="20" fill="url(#rainbow)"/><circle cx="1705" cy="189" r="20" fill="url(#shade)" opacity=".6"/>
<!-- S|S -->
<path d="M1776 172q-10 6-5 13q8 6 3 13l-6 5" fill="none" stroke="#1f45f0" stroke-width="3.400" stroke-dasharray="7 4"/>
<path d="M1783 167v46" stroke="#111" stroke-width="1.600" stroke-dasharray="5 2 1.500 2"/>
<path d="M1803 171q-13 8-7 16q9 7 3 14l-8 6" fill="none" stroke="#1f45f0" stroke-width="3.400"/>
<!-- 4 squares -->
<rect x="1844" y="172" width="14" height="14" fill="#ff2a1a"/><rect x="1862" y="172" width="14.400" height="14" fill="#ffc926"/>
<rect x="1844" y="190" width="14" height="14" fill="#a4c639"/><rect x="1862" y="190" width="14.400" height="14" fill="#6ccfd0"/>

<!-- status grip + corners -->
<path d="M2850 1800l28-28M2858 1800l20-20M2866 1800l12-12" stroke="#8a8a8a" stroke-width="2"/>
<path d="M0 1790q0 10 10 10h-10z" fill="#111"/>
</svg>
</body></html>
